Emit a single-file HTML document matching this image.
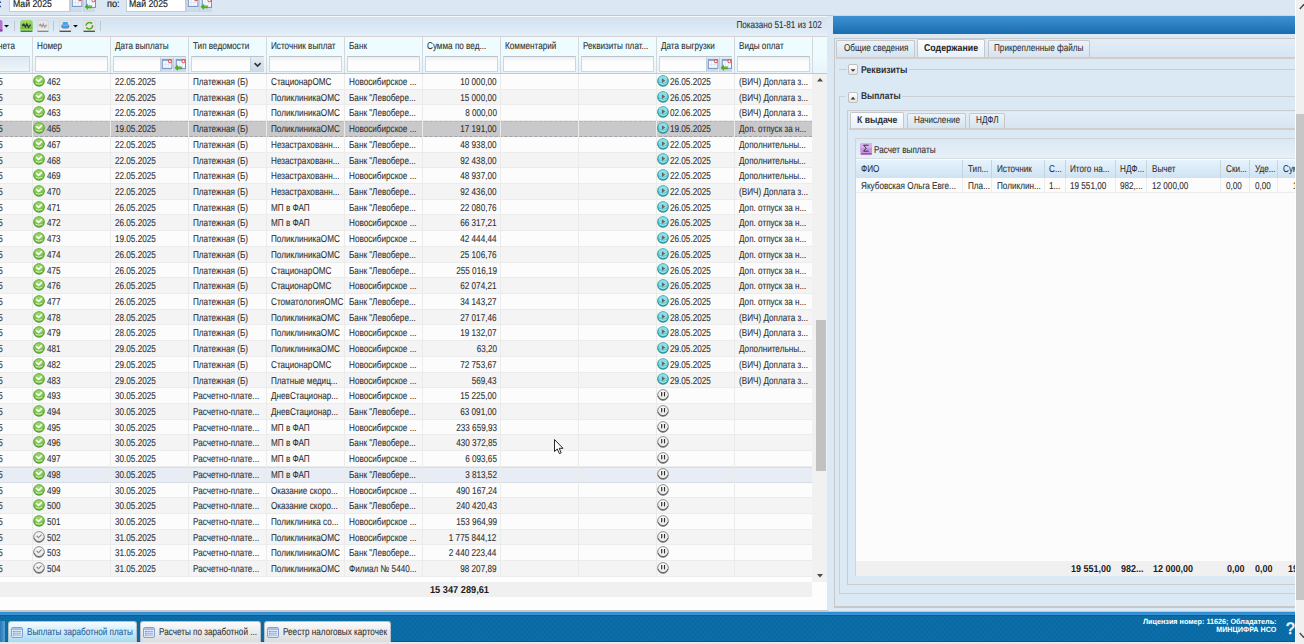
<!DOCTYPE html><html><head><meta charset="utf-8"><style>
*{box-sizing:border-box;margin:0;padding:0}
html,body{width:1304px;height:644px;overflow:hidden;background:#dbe9f5;font-family:"Liberation Sans",sans-serif;font-size:9px;color:#222}
.abs{position:absolute}
.ic{position:absolute}
.t{position:absolute;white-space:nowrap;height:12px;text-rendering:geometricPrecision}
.clip{position:absolute;overflow:hidden}
.cb{position:absolute;width:12.5px;background:linear-gradient(#e6edf4,#cbd7e3);border-left:1px solid #c6d0da}
.r{position:absolute;left:0;width:812.4px;height:15.7px;background:#fcfcfd;border-bottom:1px solid #ececec}
.r.alt{background:#f4f4f5}
.r.sel{background:#c9c9cb;border-top:1px dashed #b4b4b4;border-bottom:1px dashed #a4a4a4}
.r.hov{background:#e8ecf4;border-top:1px solid #d8dce4;border-bottom:1px solid #d8dce4}
.vs{position:absolute;width:1px;background:#ebebeb}
.box{position:absolute;border:1px solid #cbc7c3}
.tab{position:absolute;border:1px solid #c4c8cc;border-bottom:none;border-radius:2px 2px 0 0;background:linear-gradient(#edf3f9,#d6e3ef)}
.tab.act{background:linear-gradient(#fcfdff,#e6f0f8)}
.strip{position:absolute;background:#d0cdca}
.fi{position:absolute;background:linear-gradient(#eceff2,#fdfdfd 35%);border:1px solid #d0d6dc;border-top-color:#bcc2c8}
.ttab{position:absolute;border-radius:3px 3px 0 0;background:linear-gradient(#fbfbfb,#dcdcdc);border:1px solid #b8c0c8;border-bottom:none}
.ttab.act{background:linear-gradient(#f6fcff,#a6daf2)}
</style></head><body>
<div class="abs" style="left:0;top:0;width:1304px;height:15.3px;background:#dbe7f3"></div>
<div class="abs" style="left:0;top:15.0px;width:1304px;height:1px;background:#c6c6c6"></div>
<div class="t" style="left:-1.40px;transform-origin:0 0;top:-1.18px;font-size:10px;line-height:12px;transform:scaleX(0.8151);color:#111;-webkit-text-stroke:0.1px #111;-webkit-text-stroke:0.4px #111;">:</div>
<div class="abs" style="left:8.8px;top:-1px;width:60.9px;height:13px;background:#fff;border:1px solid #c4ccd4;border-top:none"></div>
<div class="t" style="left:12.60px;transform-origin:0 0;top:-1.38px;font-size:10px;line-height:12px;transform:scaleX(0.87);color:#1e1e1e;-webkit-text-stroke:0.1px #1e1e1e;-webkit-text-stroke:0.2px #1e1e1e;">Май 2025</div>
<div class="cb" style="left:69.8px;top:-3.5px;height:15.2px"><svg width="12.5" height="15" style="position:absolute;left:0;top:-1.4000000000000008px"><rect x="1.3" y="2.4" width="9.6" height="9" fill="#f6f8fc" stroke="#6f90c8" stroke-width="1"/><rect x="1.3" y="2.4" width="9.6" height="1.6" fill="#86a8dc"/><path d="M4.3 4.5 v6.5 M7.3 4.5 v6.5 M1.8 7.5 h8.6" stroke="#dde4ee" stroke-width="0.8"/><circle cx="8.9" cy="4.3" r="1.5" fill="#fff" stroke="#c83838" stroke-width="0.9"/></svg></div><div class="cb" style="left:82.7px;top:-3.5px;height:15.2px"><svg width="12.5" height="15" style="position:absolute;left:0;top:-1.0000000000000007px"><rect x="2.3" y="2.4" width="9.2" height="9" fill="#f6f8fc" stroke="#6f90c8" stroke-width="1"/><rect x="2.3" y="2.4" width="9.2" height="1.6" fill="#86a8dc"/><path d="M5.3 4.5 v6.5 M8.3 4.5 v6.5" stroke="#dde4ee" stroke-width="0.8"/><circle cx="9.4" cy="4.3" r="1.5" fill="#fff" stroke="#c83838" stroke-width="0.9"/><path d="M0.6 10.8 L3.8 7.6 L3.8 9.4 L7.8 9.4 L7.8 12.2 L3.8 12.2 L3.8 14 Z" fill="#4caa2c"/><path d="M4.4 10 h2.8" stroke="#9ad87a" stroke-width="0.8"/></svg></div>
<div class="t" style="left:106.60px;transform-origin:0 0;top:-1.38px;font-size:10px;line-height:12px;transform:scaleX(0.92);color:#1e1e1e;-webkit-text-stroke:0.1px #1e1e1e;-webkit-text-stroke:0.2px #1e1e1e;">по:</div>
<div class="abs" style="left:125.6px;top:-1px;width:60.4px;height:13px;background:#fff;border:1px solid #c4ccd4;border-top:none"></div>
<div class="t" style="left:128.70px;transform-origin:0 0;top:-1.38px;font-size:10px;line-height:12px;transform:scaleX(0.87);color:#1e1e1e;-webkit-text-stroke:0.1px #1e1e1e;-webkit-text-stroke:0.2px #1e1e1e;">Май 2025</div>
<div class="cb" style="left:186px;top:-3.5px;height:15.2px"><svg width="12.5" height="15" style="position:absolute;left:0;top:-1.4000000000000008px"><rect x="1.3" y="2.4" width="9.6" height="9" fill="#f6f8fc" stroke="#6f90c8" stroke-width="1"/><rect x="1.3" y="2.4" width="9.6" height="1.6" fill="#86a8dc"/><path d="M4.3 4.5 v6.5 M7.3 4.5 v6.5 M1.8 7.5 h8.6" stroke="#dde4ee" stroke-width="0.8"/><circle cx="8.9" cy="4.3" r="1.5" fill="#fff" stroke="#c83838" stroke-width="0.9"/></svg></div><div class="cb" style="left:199px;top:-3.5px;height:15.2px"><svg width="12.5" height="15" style="position:absolute;left:0;top:-1.0000000000000007px"><rect x="2.3" y="2.4" width="9.2" height="9" fill="#f6f8fc" stroke="#6f90c8" stroke-width="1"/><rect x="2.3" y="2.4" width="9.2" height="1.6" fill="#86a8dc"/><path d="M5.3 4.5 v6.5 M8.3 4.5 v6.5" stroke="#dde4ee" stroke-width="0.8"/><circle cx="9.4" cy="4.3" r="1.5" fill="#fff" stroke="#c83838" stroke-width="0.9"/><path d="M0.6 10.8 L3.8 7.6 L3.8 9.4 L7.8 9.4 L7.8 12.2 L3.8 12.2 L3.8 14 Z" fill="#4caa2c"/><path d="M4.4 10 h2.8" stroke="#9ad87a" stroke-width="0.8"/></svg></div>
<div class="clip" style="left:0;top:15.8px;width:827.2px;height:594.6px;background:#fdfdfe">
<div class="abs" style="left:0;top:0;width:827.6px;height:21.3px;background:linear-gradient(#d3e2ef,#e3eff9);border-top:1px solid #f4f8fc;border-bottom:1px solid #d4d2d2"></div>
<svg class="ic" style="left:-9px;top:4.2px" width="12" height="12"><rect x="0" y="0" width="11.5" height="11.5" rx="2" fill="#b474cc"/><rect x="0" y="9.5" width="11.5" height="2" fill="#8a3aa8"/></svg>
<svg class="ic" style="left:3.9px;top:9px" width="5" height="3"><path d="M0 0 L5 0 L2.5 2.6 Z" fill="#111"/></svg><div class="abs" style="left:14.2px;top:5.6px;width:1px;height:9.5px;background:#c0c8cc"></div>
<svg class="ic" style="left:20.2px;top:4.2px" width="13" height="12.5" viewBox="0 0 13 12.5">
<defs><linearGradient id="gG" x1="0" y1="0" x2="0" y2="1"><stop offset="0" stop-color="#a6dc6a"/><stop offset="1" stop-color="#62b52a"/></linearGradient></defs>
<rect x="0.3" y="0" width="12.4" height="11" rx="2" fill="url(#gG)"/>
<rect x="0.5" y="10" width="12" height="2.3" rx="1" fill="#3f8a1f"/>
<rect x="1" y="9.5" width="11" height="0.9" fill="#d8f0b8"/>
<path d="M2 4.6 L3.6 6 M3.4 3.6 L5.4 6.8 L6.8 4 L8.4 7.2 L10.6 4.6" fill="none" stroke="#3a3048" stroke-width="1.4"/>
</svg><svg class="ic" style="left:37px;top:4.2px" width="12" height="12.5" viewBox="0 0 12 12.5">
<rect x="0.4" y="0.3" width="11.2" height="11" rx="2" fill="#e6e6e6" stroke="#cfcfcf" stroke-width="0.6"/>
<rect x="0.5" y="10.2" width="11" height="2" rx="1" fill="#8a8a8a"/>
<rect x="1" y="9.6" width="10" height="0.8" fill="#fff"/>
<path d="M2 4.6 L3.4 6 M3.2 3.8 L5 6.8 L6.3 4.2 L7.8 7.2 L9.8 4.8" fill="none" stroke="#9a9a9a" stroke-width="1.2"/>
</svg><div class="abs" style="left:53.2px;top:5.6px;width:1px;height:9.5px;background:#c0c8cc"></div>
<svg class="ic" style="left:59.3px;top:4.2px" width="12.5" height="12.5" viewBox="0 0 12.5 12.5">
<rect x="0.4" y="0.3" width="11.7" height="11" rx="2" fill="#e8e6e6" stroke="#d4d0d0" stroke-width="0.6"/>
<rect x="0.5" y="10.2" width="11.5" height="2" rx="1" fill="#5a5450"/>
<rect x="1" y="9.6" width="10.5" height="0.8" fill="#fff"/>
<rect x="3.8" y="2" width="5" height="2.6" fill="#3aa8e8"/>
<rect x="2.4" y="4.4" width="7.8" height="3.6" rx="1.2" fill="#2a90d8"/>
<rect x="3.5" y="5.4" width="5.6" height="0.8" fill="#8fd0f4"/>
<rect x="3.4" y="7.6" width="5.8" height="1.2" fill="#9aa0d8"/>
</svg><svg class="ic" style="left:73px;top:9px" width="5" height="3"><path d="M0 0 L5 0 L2.5 2.6 Z" fill="#111"/></svg><svg class="ic" style="left:83.4px;top:4.2px" width="12.5" height="12.5" viewBox="0 0 12.5 12.5">
<rect x="0.4" y="0.3" width="11.7" height="11" rx="2" fill="#e8e6e6" stroke="#d4d0d0" stroke-width="0.6"/>
<rect x="0.5" y="10.2" width="11.5" height="2" rx="1" fill="#5a5450"/>
<rect x="1" y="9.6" width="10.5" height="0.8" fill="#fff"/>
<path d="M3 5.8 A3.2 3.2 0 0 1 8.6 3.6" fill="none" stroke="#4aae2a" stroke-width="1.5"/>
<path d="M9.5 5.2 A3.2 3.2 0 0 1 3.9 7.8" fill="none" stroke="#4aae2a" stroke-width="1.5"/>
<path d="M7.6 2.2 L9.6 2.6 L9 4.6 Z" fill="#4aae2a"/>
<path d="M4.9 9.2 L2.9 8.8 L3.5 6.8 Z" fill="#4aae2a"/>
</svg><div class="abs" style="left:100.3px;top:5.6px;width:1px;height:9.5px;background:#c0c8cc"></div>
<div class="t" style="right:calc(100% - 821.70px);transform-origin:100% 0;top:4.31px;font-size:10px;line-height:12px;transform:scaleX(0.8151);color:#303030;-webkit-text-stroke:0.1px #303030;">Показано 51-81 из 102</div>
<div class="abs" style="left:0;top:21.30px;width:827.6px;height:36.9px;background:linear-gradient(#effbfe 0,#eefbff 52%,#e6f4fb 100%)"></div>
<div class="abs" style="left:0;top:56.80px;width:827.6px;height:1.6px;background:#b9cad8"></div>
<div class="t" style="left:-2.00px;transform-origin:0 0;top:25.31px;font-size:10px;line-height:12px;transform:scaleX(0.8151);color:#303030;-webkit-text-stroke:0.1px #303030;">нета</div>
<div class="fi" style="left:-5.00px;top:40.30px;width:35.00px;height:16.4px;background:linear-gradient(#dde9f3,#eef5fa);"></div>
<div class="t" style="left:36.60px;transform-origin:0 0;top:25.31px;font-size:10px;line-height:12px;transform:scaleX(0.8151);color:#303030;-webkit-text-stroke:0.1px #303030;">Номер</div>
<div class="fi" style="left:34.90px;top:40.30px;width:73.10px;height:16.4px;"></div>
<div class="t" style="left:114.60px;transform-origin:0 0;top:25.31px;font-size:10px;line-height:12px;transform:scaleX(0.8151);color:#303030;-webkit-text-stroke:0.1px #303030;">Дата выплаты</div>
<div class="fi" style="left:112.90px;top:40.30px;width:73.20px;height:16.4px;"></div>
<div class="cb" style="left:159.6px;top:40.8px;height:15px"><svg width="12.5" height="15" style="position:absolute;left:0;top:0px"><rect x="1.3" y="2.4" width="9.6" height="9" fill="#f6f8fc" stroke="#6f90c8" stroke-width="1"/><rect x="1.3" y="2.4" width="9.6" height="1.6" fill="#86a8dc"/><path d="M4.3 4.5 v6.5 M7.3 4.5 v6.5 M1.8 7.5 h8.6" stroke="#dde4ee" stroke-width="0.8"/><circle cx="8.9" cy="4.3" r="1.5" fill="#fff" stroke="#c83838" stroke-width="0.9"/></svg></div><div class="cb" style="left:172.8px;top:40.8px;height:15px"><svg width="12.5" height="15" style="position:absolute;left:0;top:0px"><rect x="2.3" y="2.4" width="9.2" height="9" fill="#f6f8fc" stroke="#6f90c8" stroke-width="1"/><rect x="2.3" y="2.4" width="9.2" height="1.6" fill="#86a8dc"/><path d="M5.3 4.5 v6.5 M8.3 4.5 v6.5" stroke="#dde4ee" stroke-width="0.8"/><circle cx="9.4" cy="4.3" r="1.5" fill="#fff" stroke="#c83838" stroke-width="0.9"/><path d="M0.6 10.8 L3.8 7.6 L3.8 9.4 L7.8 9.4 L7.8 12.2 L3.8 12.2 L3.8 14 Z" fill="#4caa2c"/><path d="M4.4 10 h2.8" stroke="#9ad87a" stroke-width="0.8"/></svg></div>
<div class="t" style="left:192.70px;transform-origin:0 0;top:25.31px;font-size:10px;line-height:12px;transform:scaleX(0.8151);color:#303030;-webkit-text-stroke:0.1px #303030;">Тип ведомости</div>
<div class="fi" style="left:191.00px;top:40.30px;width:73.00px;height:16.4px;"></div>
<div class="cb" style="left:250.30px;top:40.80px;width:13.6px;height:15px"><svg width="13" height="15" style="position:absolute;left:0;top:0"><path d="M3.6 6.2 L6.6 9 L9.6 6.2" fill="none" stroke="#2a3440" stroke-width="1.7"/></svg></div>
<div class="t" style="left:270.60px;transform-origin:0 0;top:25.31px;font-size:10px;line-height:12px;transform:scaleX(0.8151);color:#303030;-webkit-text-stroke:0.1px #303030;">Источник выплат</div>
<div class="fi" style="left:268.90px;top:40.30px;width:73.30px;height:16.4px;"></div>
<div class="t" style="left:348.80px;transform-origin:0 0;top:25.31px;font-size:10px;line-height:12px;transform:scaleX(0.8151);color:#303030;-webkit-text-stroke:0.1px #303030;">Банк</div>
<div class="fi" style="left:347.10px;top:40.30px;width:73.20px;height:16.4px;"></div>
<div class="t" style="left:426.90px;transform-origin:0 0;top:25.31px;font-size:10px;line-height:12px;transform:scaleX(0.8151);color:#303030;-webkit-text-stroke:0.1px #303030;">Сумма по вед...</div>
<div class="fi" style="left:425.20px;top:40.30px;width:73.00px;height:16.4px;"></div>
<div class="t" style="left:504.80px;transform-origin:0 0;top:25.31px;font-size:10px;line-height:12px;transform:scaleX(0.8151);color:#303030;-webkit-text-stroke:0.1px #303030;">Комментарий</div>
<div class="fi" style="left:503.10px;top:40.30px;width:73.20px;height:16.4px;"></div>
<div class="t" style="left:582.90px;transform-origin:0 0;top:25.31px;font-size:10px;line-height:12px;transform:scaleX(0.8151);color:#303030;-webkit-text-stroke:0.1px #303030;">Реквизиты плат...</div>
<div class="fi" style="left:581.20px;top:40.30px;width:73.00px;height:16.4px;"></div>
<div class="t" style="left:660.80px;transform-origin:0 0;top:25.31px;font-size:10px;line-height:12px;transform:scaleX(0.8151);color:#303030;-webkit-text-stroke:0.1px #303030;">Дата выгрузки</div>
<div class="fi" style="left:659.10px;top:40.30px;width:73.20px;height:16.4px;"></div>
<div class="cb" style="left:705.8000000000001px;top:40.8px;height:15px"><svg width="12.5" height="15" style="position:absolute;left:0;top:0px"><rect x="1.3" y="2.4" width="9.6" height="9" fill="#f6f8fc" stroke="#6f90c8" stroke-width="1"/><rect x="1.3" y="2.4" width="9.6" height="1.6" fill="#86a8dc"/><path d="M4.3 4.5 v6.5 M7.3 4.5 v6.5 M1.8 7.5 h8.6" stroke="#dde4ee" stroke-width="0.8"/><circle cx="8.9" cy="4.3" r="1.5" fill="#fff" stroke="#c83838" stroke-width="0.9"/></svg></div><div class="cb" style="left:719.0px;top:40.8px;height:15px"><svg width="12.5" height="15" style="position:absolute;left:0;top:0px"><rect x="2.3" y="2.4" width="9.2" height="9" fill="#f6f8fc" stroke="#6f90c8" stroke-width="1"/><rect x="2.3" y="2.4" width="9.2" height="1.6" fill="#86a8dc"/><path d="M5.3 4.5 v6.5 M8.3 4.5 v6.5" stroke="#dde4ee" stroke-width="0.8"/><circle cx="9.4" cy="4.3" r="1.5" fill="#fff" stroke="#c83838" stroke-width="0.9"/><path d="M0.6 10.8 L3.8 7.6 L3.8 9.4 L7.8 9.4 L7.8 12.2 L3.8 12.2 L3.8 14 Z" fill="#4caa2c"/><path d="M4.4 10 h2.8" stroke="#9ad87a" stroke-width="0.8"/></svg></div>
<div class="t" style="left:738.90px;transform-origin:0 0;top:25.31px;font-size:10px;line-height:12px;transform:scaleX(0.8151);color:#303030;-webkit-text-stroke:0.1px #303030;">Виды оплат</div>
<div class="fi" style="left:737.20px;top:40.30px;width:72.90px;height:16.4px;"></div>
<div class="vs" style="left:31.80px;top:21.30px;height:35.6px;background:#d4d8dc"></div>
<div class="vs" style="left:109.80px;top:21.30px;height:35.6px;background:#d4d8dc"></div>
<div class="vs" style="left:187.90px;top:21.30px;height:35.6px;background:#d4d8dc"></div>
<div class="vs" style="left:265.80px;top:21.30px;height:35.6px;background:#d4d8dc"></div>
<div class="vs" style="left:344.00px;top:21.30px;height:35.6px;background:#d4d8dc"></div>
<div class="vs" style="left:422.10px;top:21.30px;height:35.6px;background:#d4d8dc"></div>
<div class="vs" style="left:500.00px;top:21.30px;height:35.6px;background:#d4d8dc"></div>
<div class="vs" style="left:578.10px;top:21.30px;height:35.6px;background:#d4d8dc"></div>
<div class="vs" style="left:656.00px;top:21.30px;height:35.6px;background:#d4d8dc"></div>
<div class="vs" style="left:734.10px;top:21.30px;height:35.6px;background:#d4d8dc"></div>
<div class="vs" style="left:811.90px;top:21.30px;height:35.6px;background:#d4d8dc"></div>
<div class="r" style="top:58.20px"></div>
<div class="r alt" style="top:73.92px"></div>
<div class="r" style="top:89.63px"></div>
<div class="r sel" style="top:105.35px"></div>
<div class="r" style="top:121.06px"></div>
<div class="r alt" style="top:136.78px"></div>
<div class="r" style="top:152.50px"></div>
<div class="r alt" style="top:168.21px"></div>
<div class="r" style="top:183.93px"></div>
<div class="r alt" style="top:199.64px"></div>
<div class="r" style="top:215.36px"></div>
<div class="r alt" style="top:231.08px"></div>
<div class="r" style="top:246.79px"></div>
<div class="r alt" style="top:262.51px"></div>
<div class="r" style="top:278.22px"></div>
<div class="r alt" style="top:293.94px"></div>
<div class="r" style="top:309.66px"></div>
<div class="r alt" style="top:325.37px"></div>
<div class="r" style="top:341.09px"></div>
<div class="r alt" style="top:356.80px"></div>
<div class="r" style="top:372.52px"></div>
<div class="r alt" style="top:388.24px"></div>
<div class="r" style="top:403.95px"></div>
<div class="r alt" style="top:419.67px"></div>
<div class="r" style="top:435.38px"></div>
<div class="r hov" style="top:451.10px"></div>
<div class="r" style="top:466.82px"></div>
<div class="r alt" style="top:482.53px"></div>
<div class="r" style="top:498.25px"></div>
<div class="r alt" style="top:513.96px"></div>
<div class="r" style="top:529.68px"></div>
<div class="r alt" style="top:545.40px"></div>
<div class="vs" style="left:31.80px;top:58.20px;height:502.91px"></div>
<div class="vs" style="left:109.80px;top:58.20px;height:502.91px"></div>
<div class="vs" style="left:187.90px;top:58.20px;height:502.91px"></div>
<div class="vs" style="left:265.80px;top:58.20px;height:502.91px"></div>
<div class="vs" style="left:344.00px;top:58.20px;height:502.91px"></div>
<div class="vs" style="left:422.10px;top:58.20px;height:502.91px"></div>
<div class="vs" style="left:500.00px;top:58.20px;height:502.91px"></div>
<div class="vs" style="left:578.10px;top:58.20px;height:502.91px"></div>
<div class="vs" style="left:656.00px;top:58.20px;height:502.91px"></div>
<div class="vs" style="left:734.10px;top:58.20px;height:502.91px"></div>
<div class="vs" style="left:811.90px;top:58.20px;height:502.91px"></div>
<div class="t" style="left:-37.60px;transform-origin:0 0;top:61.22px;font-size:10px;line-height:12px;transform:scaleX(0.8151);color:#303030;-webkit-text-stroke:0.1px #303030;">22.05.2025</div>
<svg class="ic" style="left:33.20px;top:59.10px" width="12" height="12" viewBox="0 0 12 12"><circle cx="6" cy="6" r="5.8" fill="#4e9a2a"/><circle cx="6" cy="5.6" r="5" fill="#7cc24a"/><ellipse cx="6" cy="4.2" rx="3.8" ry="2.8" fill="#9ad46c"/><path d="M3.2 4.2 L5.6 6.4 L8.8 3.2" fill="none" stroke="#fff" stroke-width="1.5"/><path d="M2.6 8.2 Q6 10.2 9.4 8.2" fill="none" stroke="#e8f6dc" stroke-width="0.8"/></svg>
<div class="t" style="left:47.10px;transform-origin:0 0;top:61.22px;font-size:10px;line-height:12px;transform:scaleX(0.8151);color:#303030;-webkit-text-stroke:0.1px #303030;">462</div>
<div class="t" style="left:114.90px;transform-origin:0 0;top:61.22px;font-size:10px;line-height:12px;transform:scaleX(0.8151);color:#303030;-webkit-text-stroke:0.1px #303030;">22.05.2025</div>
<div class="t" style="left:193.00px;transform-origin:0 0;top:61.22px;font-size:10px;line-height:12px;transform:scaleX(0.8151);color:#303030;-webkit-text-stroke:0.1px #303030;">Платежная (Б)</div>
<div class="t" style="left:270.90px;transform-origin:0 0;top:61.22px;font-size:10px;line-height:12px;transform:scaleX(0.8151);color:#303030;-webkit-text-stroke:0.1px #303030;">СтационарОМС</div>
<div class="t" style="left:349.10px;transform-origin:0 0;top:61.22px;font-size:10px;line-height:12px;transform:scaleX(0.8151);color:#303030;-webkit-text-stroke:0.1px #303030;">Новосибирское ...</div>
<div class="t" style="right:calc(100% - 496.70px);transform-origin:100% 0;top:61.22px;font-size:10px;line-height:12px;transform:scaleX(0.8151);color:#303030;-webkit-text-stroke:0.1px #303030;">10 000,00</div>
<svg class="ic" style="left:657.00px;top:59.10px" width="12" height="12" viewBox="0 0 12 12"><circle cx="6" cy="6" r="5.8" fill="#1e8f96"/><circle cx="6" cy="5.5" r="5" fill="#5cc8d0"/><ellipse cx="6" cy="4.4" rx="4" ry="3.2" fill="#8ee0e6"/><path d="M4.9 3.2 L8.2 5.6 L4.9 8 Z" fill="#6a6468"/><path d="M2.4 8.4 Q6 10.4 9.6 8.4" fill="none" stroke="#d0f4f6" stroke-width="0.7"/></svg>
<div class="t" style="left:670.10px;transform-origin:0 0;top:61.22px;font-size:10px;line-height:12px;transform:scaleX(0.8151);color:#303030;-webkit-text-stroke:0.1px #303030;">26.05.2025</div>
<div class="t" style="left:739.20px;transform-origin:0 0;top:61.22px;font-size:10px;line-height:12px;transform:scaleX(0.8151);color:#303030;-webkit-text-stroke:0.1px #303030;">(ВИЧ) Доплата з...</div>
<div class="t" style="left:-37.60px;transform-origin:0 0;top:76.93px;font-size:10px;line-height:12px;transform:scaleX(0.8151);color:#303030;-webkit-text-stroke:0.1px #303030;">22.05.2025</div>
<svg class="ic" style="left:33.20px;top:74.82px" width="12" height="12" viewBox="0 0 12 12"><circle cx="6" cy="6" r="5.8" fill="#4e9a2a"/><circle cx="6" cy="5.6" r="5" fill="#7cc24a"/><ellipse cx="6" cy="4.2" rx="3.8" ry="2.8" fill="#9ad46c"/><path d="M3.2 4.2 L5.6 6.4 L8.8 3.2" fill="none" stroke="#fff" stroke-width="1.5"/><path d="M2.6 8.2 Q6 10.2 9.4 8.2" fill="none" stroke="#e8f6dc" stroke-width="0.8"/></svg>
<div class="t" style="left:47.10px;transform-origin:0 0;top:76.93px;font-size:10px;line-height:12px;transform:scaleX(0.8151);color:#303030;-webkit-text-stroke:0.1px #303030;">463</div>
<div class="t" style="left:114.90px;transform-origin:0 0;top:76.93px;font-size:10px;line-height:12px;transform:scaleX(0.8151);color:#303030;-webkit-text-stroke:0.1px #303030;">22.05.2025</div>
<div class="t" style="left:193.00px;transform-origin:0 0;top:76.93px;font-size:10px;line-height:12px;transform:scaleX(0.8151);color:#303030;-webkit-text-stroke:0.1px #303030;">Платежная (Б)</div>
<div class="t" style="left:270.90px;transform-origin:0 0;top:76.93px;font-size:10px;line-height:12px;transform:scaleX(0.8151);color:#303030;-webkit-text-stroke:0.1px #303030;">ПоликлиникаОМС</div>
<div class="t" style="left:349.10px;transform-origin:0 0;top:76.93px;font-size:10px;line-height:12px;transform:scaleX(0.8151);color:#303030;-webkit-text-stroke:0.1px #303030;">Банк &quot;Левобере...</div>
<div class="t" style="right:calc(100% - 496.70px);transform-origin:100% 0;top:76.93px;font-size:10px;line-height:12px;transform:scaleX(0.8151);color:#303030;-webkit-text-stroke:0.1px #303030;">15 000,00</div>
<svg class="ic" style="left:657.00px;top:74.82px" width="12" height="12" viewBox="0 0 12 12"><circle cx="6" cy="6" r="5.8" fill="#1e8f96"/><circle cx="6" cy="5.5" r="5" fill="#5cc8d0"/><ellipse cx="6" cy="4.4" rx="4" ry="3.2" fill="#8ee0e6"/><path d="M4.9 3.2 L8.2 5.6 L4.9 8 Z" fill="#6a6468"/><path d="M2.4 8.4 Q6 10.4 9.6 8.4" fill="none" stroke="#d0f4f6" stroke-width="0.7"/></svg>
<div class="t" style="left:670.10px;transform-origin:0 0;top:76.93px;font-size:10px;line-height:12px;transform:scaleX(0.8151);color:#303030;-webkit-text-stroke:0.1px #303030;">26.05.2025</div>
<div class="t" style="left:739.20px;transform-origin:0 0;top:76.93px;font-size:10px;line-height:12px;transform:scaleX(0.8151);color:#303030;-webkit-text-stroke:0.1px #303030;">(ВИЧ) Доплата з...</div>
<div class="t" style="left:-37.60px;transform-origin:0 0;top:92.65px;font-size:10px;line-height:12px;transform:scaleX(0.8151);color:#303030;-webkit-text-stroke:0.1px #303030;">22.05.2025</div>
<svg class="ic" style="left:33.20px;top:90.53px" width="12" height="12" viewBox="0 0 12 12"><circle cx="6" cy="6" r="5.8" fill="#4e9a2a"/><circle cx="6" cy="5.6" r="5" fill="#7cc24a"/><ellipse cx="6" cy="4.2" rx="3.8" ry="2.8" fill="#9ad46c"/><path d="M3.2 4.2 L5.6 6.4 L8.8 3.2" fill="none" stroke="#fff" stroke-width="1.5"/><path d="M2.6 8.2 Q6 10.2 9.4 8.2" fill="none" stroke="#e8f6dc" stroke-width="0.8"/></svg>
<div class="t" style="left:47.10px;transform-origin:0 0;top:92.65px;font-size:10px;line-height:12px;transform:scaleX(0.8151);color:#303030;-webkit-text-stroke:0.1px #303030;">463</div>
<div class="t" style="left:114.90px;transform-origin:0 0;top:92.65px;font-size:10px;line-height:12px;transform:scaleX(0.8151);color:#303030;-webkit-text-stroke:0.1px #303030;">22.05.2025</div>
<div class="t" style="left:193.00px;transform-origin:0 0;top:92.65px;font-size:10px;line-height:12px;transform:scaleX(0.8151);color:#303030;-webkit-text-stroke:0.1px #303030;">Платежная (Б)</div>
<div class="t" style="left:270.90px;transform-origin:0 0;top:92.65px;font-size:10px;line-height:12px;transform:scaleX(0.8151);color:#303030;-webkit-text-stroke:0.1px #303030;">ПоликлиникаОМС</div>
<div class="t" style="left:349.10px;transform-origin:0 0;top:92.65px;font-size:10px;line-height:12px;transform:scaleX(0.8151);color:#303030;-webkit-text-stroke:0.1px #303030;">Банк &quot;Левобере...</div>
<div class="t" style="right:calc(100% - 496.70px);transform-origin:100% 0;top:92.65px;font-size:10px;line-height:12px;transform:scaleX(0.8151);color:#303030;-webkit-text-stroke:0.1px #303030;">8 000,00</div>
<svg class="ic" style="left:657.00px;top:90.53px" width="12" height="12" viewBox="0 0 12 12"><circle cx="6" cy="6" r="5.8" fill="#1e8f96"/><circle cx="6" cy="5.5" r="5" fill="#5cc8d0"/><ellipse cx="6" cy="4.4" rx="4" ry="3.2" fill="#8ee0e6"/><path d="M4.9 3.2 L8.2 5.6 L4.9 8 Z" fill="#6a6468"/><path d="M2.4 8.4 Q6 10.4 9.6 8.4" fill="none" stroke="#d0f4f6" stroke-width="0.7"/></svg>
<div class="t" style="left:670.10px;transform-origin:0 0;top:92.65px;font-size:10px;line-height:12px;transform:scaleX(0.8151);color:#303030;-webkit-text-stroke:0.1px #303030;">02.06.2025</div>
<div class="t" style="left:739.20px;transform-origin:0 0;top:92.65px;font-size:10px;line-height:12px;transform:scaleX(0.8151);color:#303030;-webkit-text-stroke:0.1px #303030;">(ВИЧ) Доплата з...</div>
<div class="t" style="left:-37.60px;transform-origin:0 0;top:108.36px;font-size:10px;line-height:12px;transform:scaleX(0.8151);color:#303030;-webkit-text-stroke:0.1px #303030;">19.05.2025</div>
<svg class="ic" style="left:33.20px;top:106.25px" width="12" height="12" viewBox="0 0 12 12"><circle cx="6" cy="6" r="5.8" fill="#4e9a2a"/><circle cx="6" cy="5.6" r="5" fill="#7cc24a"/><ellipse cx="6" cy="4.2" rx="3.8" ry="2.8" fill="#9ad46c"/><path d="M3.2 4.2 L5.6 6.4 L8.8 3.2" fill="none" stroke="#fff" stroke-width="1.5"/><path d="M2.6 8.2 Q6 10.2 9.4 8.2" fill="none" stroke="#e8f6dc" stroke-width="0.8"/></svg>
<div class="t" style="left:47.10px;transform-origin:0 0;top:108.36px;font-size:10px;line-height:12px;transform:scaleX(0.8151);color:#303030;-webkit-text-stroke:0.1px #303030;">465</div>
<div class="t" style="left:114.90px;transform-origin:0 0;top:108.36px;font-size:10px;line-height:12px;transform:scaleX(0.8151);color:#303030;-webkit-text-stroke:0.1px #303030;">19.05.2025</div>
<div class="t" style="left:193.00px;transform-origin:0 0;top:108.36px;font-size:10px;line-height:12px;transform:scaleX(0.8151);color:#303030;-webkit-text-stroke:0.1px #303030;">Платежная (Б)</div>
<div class="t" style="left:270.90px;transform-origin:0 0;top:108.36px;font-size:10px;line-height:12px;transform:scaleX(0.8151);color:#303030;-webkit-text-stroke:0.1px #303030;">ПоликлиникаОМС</div>
<div class="t" style="left:349.10px;transform-origin:0 0;top:108.36px;font-size:10px;line-height:12px;transform:scaleX(0.8151);color:#303030;-webkit-text-stroke:0.1px #303030;">Новосибирское ...</div>
<div class="t" style="right:calc(100% - 496.70px);transform-origin:100% 0;top:108.36px;font-size:10px;line-height:12px;transform:scaleX(0.8151);color:#303030;-webkit-text-stroke:0.1px #303030;">17 191,00</div>
<svg class="ic" style="left:657.00px;top:106.25px" width="12" height="12" viewBox="0 0 12 12"><circle cx="6" cy="6" r="5.8" fill="#1e8f96"/><circle cx="6" cy="5.5" r="5" fill="#5cc8d0"/><ellipse cx="6" cy="4.4" rx="4" ry="3.2" fill="#8ee0e6"/><path d="M4.9 3.2 L8.2 5.6 L4.9 8 Z" fill="#6a6468"/><path d="M2.4 8.4 Q6 10.4 9.6 8.4" fill="none" stroke="#d0f4f6" stroke-width="0.7"/></svg>
<div class="t" style="left:670.10px;transform-origin:0 0;top:108.36px;font-size:10px;line-height:12px;transform:scaleX(0.8151);color:#303030;-webkit-text-stroke:0.1px #303030;">19.05.2025</div>
<div class="t" style="left:739.20px;transform-origin:0 0;top:108.36px;font-size:10px;line-height:12px;transform:scaleX(0.8151);color:#303030;-webkit-text-stroke:0.1px #303030;">Доп. отпуск за н...</div>
<div class="t" style="left:-37.60px;transform-origin:0 0;top:124.08px;font-size:10px;line-height:12px;transform:scaleX(0.8151);color:#303030;-webkit-text-stroke:0.1px #303030;">22.05.2025</div>
<svg class="ic" style="left:33.20px;top:121.96px" width="12" height="12" viewBox="0 0 12 12"><circle cx="6" cy="6" r="5.8" fill="#4e9a2a"/><circle cx="6" cy="5.6" r="5" fill="#7cc24a"/><ellipse cx="6" cy="4.2" rx="3.8" ry="2.8" fill="#9ad46c"/><path d="M3.2 4.2 L5.6 6.4 L8.8 3.2" fill="none" stroke="#fff" stroke-width="1.5"/><path d="M2.6 8.2 Q6 10.2 9.4 8.2" fill="none" stroke="#e8f6dc" stroke-width="0.8"/></svg>
<div class="t" style="left:47.10px;transform-origin:0 0;top:124.08px;font-size:10px;line-height:12px;transform:scaleX(0.8151);color:#303030;-webkit-text-stroke:0.1px #303030;">467</div>
<div class="t" style="left:114.90px;transform-origin:0 0;top:124.08px;font-size:10px;line-height:12px;transform:scaleX(0.8151);color:#303030;-webkit-text-stroke:0.1px #303030;">22.05.2025</div>
<div class="t" style="left:193.00px;transform-origin:0 0;top:124.08px;font-size:10px;line-height:12px;transform:scaleX(0.8151);color:#303030;-webkit-text-stroke:0.1px #303030;">Платежная (Б)</div>
<div class="t" style="left:270.90px;transform-origin:0 0;top:124.08px;font-size:10px;line-height:12px;transform:scaleX(0.8151);color:#303030;-webkit-text-stroke:0.1px #303030;">Незастрахованн...</div>
<div class="t" style="left:349.10px;transform-origin:0 0;top:124.08px;font-size:10px;line-height:12px;transform:scaleX(0.8151);color:#303030;-webkit-text-stroke:0.1px #303030;">Банк &quot;Левобере...</div>
<div class="t" style="right:calc(100% - 496.70px);transform-origin:100% 0;top:124.08px;font-size:10px;line-height:12px;transform:scaleX(0.8151);color:#303030;-webkit-text-stroke:0.1px #303030;">48 938,00</div>
<svg class="ic" style="left:657.00px;top:121.96px" width="12" height="12" viewBox="0 0 12 12"><circle cx="6" cy="6" r="5.8" fill="#1e8f96"/><circle cx="6" cy="5.5" r="5" fill="#5cc8d0"/><ellipse cx="6" cy="4.4" rx="4" ry="3.2" fill="#8ee0e6"/><path d="M4.9 3.2 L8.2 5.6 L4.9 8 Z" fill="#6a6468"/><path d="M2.4 8.4 Q6 10.4 9.6 8.4" fill="none" stroke="#d0f4f6" stroke-width="0.7"/></svg>
<div class="t" style="left:670.10px;transform-origin:0 0;top:124.08px;font-size:10px;line-height:12px;transform:scaleX(0.8151);color:#303030;-webkit-text-stroke:0.1px #303030;">22.05.2025</div>
<div class="t" style="left:739.20px;transform-origin:0 0;top:124.08px;font-size:10px;line-height:12px;transform:scaleX(0.8151);color:#303030;-webkit-text-stroke:0.1px #303030;">Дополнительны...</div>
<div class="t" style="left:-37.60px;transform-origin:0 0;top:139.79px;font-size:10px;line-height:12px;transform:scaleX(0.8151);color:#303030;-webkit-text-stroke:0.1px #303030;">22.05.2025</div>
<svg class="ic" style="left:33.20px;top:137.68px" width="12" height="12" viewBox="0 0 12 12"><circle cx="6" cy="6" r="5.8" fill="#4e9a2a"/><circle cx="6" cy="5.6" r="5" fill="#7cc24a"/><ellipse cx="6" cy="4.2" rx="3.8" ry="2.8" fill="#9ad46c"/><path d="M3.2 4.2 L5.6 6.4 L8.8 3.2" fill="none" stroke="#fff" stroke-width="1.5"/><path d="M2.6 8.2 Q6 10.2 9.4 8.2" fill="none" stroke="#e8f6dc" stroke-width="0.8"/></svg>
<div class="t" style="left:47.10px;transform-origin:0 0;top:139.79px;font-size:10px;line-height:12px;transform:scaleX(0.8151);color:#303030;-webkit-text-stroke:0.1px #303030;">468</div>
<div class="t" style="left:114.90px;transform-origin:0 0;top:139.79px;font-size:10px;line-height:12px;transform:scaleX(0.8151);color:#303030;-webkit-text-stroke:0.1px #303030;">22.05.2025</div>
<div class="t" style="left:193.00px;transform-origin:0 0;top:139.79px;font-size:10px;line-height:12px;transform:scaleX(0.8151);color:#303030;-webkit-text-stroke:0.1px #303030;">Платежная (Б)</div>
<div class="t" style="left:270.90px;transform-origin:0 0;top:139.79px;font-size:10px;line-height:12px;transform:scaleX(0.8151);color:#303030;-webkit-text-stroke:0.1px #303030;">Незастрахованн...</div>
<div class="t" style="left:349.10px;transform-origin:0 0;top:139.79px;font-size:10px;line-height:12px;transform:scaleX(0.8151);color:#303030;-webkit-text-stroke:0.1px #303030;">Банк &quot;Левобере...</div>
<div class="t" style="right:calc(100% - 496.70px);transform-origin:100% 0;top:139.79px;font-size:10px;line-height:12px;transform:scaleX(0.8151);color:#303030;-webkit-text-stroke:0.1px #303030;">92 438,00</div>
<svg class="ic" style="left:657.00px;top:137.68px" width="12" height="12" viewBox="0 0 12 12"><circle cx="6" cy="6" r="5.8" fill="#1e8f96"/><circle cx="6" cy="5.5" r="5" fill="#5cc8d0"/><ellipse cx="6" cy="4.4" rx="4" ry="3.2" fill="#8ee0e6"/><path d="M4.9 3.2 L8.2 5.6 L4.9 8 Z" fill="#6a6468"/><path d="M2.4 8.4 Q6 10.4 9.6 8.4" fill="none" stroke="#d0f4f6" stroke-width="0.7"/></svg>
<div class="t" style="left:670.10px;transform-origin:0 0;top:139.79px;font-size:10px;line-height:12px;transform:scaleX(0.8151);color:#303030;-webkit-text-stroke:0.1px #303030;">22.05.2025</div>
<div class="t" style="left:739.20px;transform-origin:0 0;top:139.79px;font-size:10px;line-height:12px;transform:scaleX(0.8151);color:#303030;-webkit-text-stroke:0.1px #303030;">Дополнительны...</div>
<div class="t" style="left:-37.60px;transform-origin:0 0;top:155.51px;font-size:10px;line-height:12px;transform:scaleX(0.8151);color:#303030;-webkit-text-stroke:0.1px #303030;">22.05.2025</div>
<svg class="ic" style="left:33.20px;top:153.40px" width="12" height="12" viewBox="0 0 12 12"><circle cx="6" cy="6" r="5.8" fill="#4e9a2a"/><circle cx="6" cy="5.6" r="5" fill="#7cc24a"/><ellipse cx="6" cy="4.2" rx="3.8" ry="2.8" fill="#9ad46c"/><path d="M3.2 4.2 L5.6 6.4 L8.8 3.2" fill="none" stroke="#fff" stroke-width="1.5"/><path d="M2.6 8.2 Q6 10.2 9.4 8.2" fill="none" stroke="#e8f6dc" stroke-width="0.8"/></svg>
<div class="t" style="left:47.10px;transform-origin:0 0;top:155.51px;font-size:10px;line-height:12px;transform:scaleX(0.8151);color:#303030;-webkit-text-stroke:0.1px #303030;">469</div>
<div class="t" style="left:114.90px;transform-origin:0 0;top:155.51px;font-size:10px;line-height:12px;transform:scaleX(0.8151);color:#303030;-webkit-text-stroke:0.1px #303030;">22.05.2025</div>
<div class="t" style="left:193.00px;transform-origin:0 0;top:155.51px;font-size:10px;line-height:12px;transform:scaleX(0.8151);color:#303030;-webkit-text-stroke:0.1px #303030;">Платежная (Б)</div>
<div class="t" style="left:270.90px;transform-origin:0 0;top:155.51px;font-size:10px;line-height:12px;transform:scaleX(0.8151);color:#303030;-webkit-text-stroke:0.1px #303030;">Незастрахованн...</div>
<div class="t" style="left:349.10px;transform-origin:0 0;top:155.51px;font-size:10px;line-height:12px;transform:scaleX(0.8151);color:#303030;-webkit-text-stroke:0.1px #303030;">Новосибирское ...</div>
<div class="t" style="right:calc(100% - 496.70px);transform-origin:100% 0;top:155.51px;font-size:10px;line-height:12px;transform:scaleX(0.8151);color:#303030;-webkit-text-stroke:0.1px #303030;">48 937,00</div>
<svg class="ic" style="left:657.00px;top:153.40px" width="12" height="12" viewBox="0 0 12 12"><circle cx="6" cy="6" r="5.8" fill="#1e8f96"/><circle cx="6" cy="5.5" r="5" fill="#5cc8d0"/><ellipse cx="6" cy="4.4" rx="4" ry="3.2" fill="#8ee0e6"/><path d="M4.9 3.2 L8.2 5.6 L4.9 8 Z" fill="#6a6468"/><path d="M2.4 8.4 Q6 10.4 9.6 8.4" fill="none" stroke="#d0f4f6" stroke-width="0.7"/></svg>
<div class="t" style="left:670.10px;transform-origin:0 0;top:155.51px;font-size:10px;line-height:12px;transform:scaleX(0.8151);color:#303030;-webkit-text-stroke:0.1px #303030;">22.05.2025</div>
<div class="t" style="left:739.20px;transform-origin:0 0;top:155.51px;font-size:10px;line-height:12px;transform:scaleX(0.8151);color:#303030;-webkit-text-stroke:0.1px #303030;">Дополнительны...</div>
<div class="t" style="left:-37.60px;transform-origin:0 0;top:171.23px;font-size:10px;line-height:12px;transform:scaleX(0.8151);color:#303030;-webkit-text-stroke:0.1px #303030;">22.05.2025</div>
<svg class="ic" style="left:33.20px;top:169.11px" width="12" height="12" viewBox="0 0 12 12"><circle cx="6" cy="6" r="5.8" fill="#4e9a2a"/><circle cx="6" cy="5.6" r="5" fill="#7cc24a"/><ellipse cx="6" cy="4.2" rx="3.8" ry="2.8" fill="#9ad46c"/><path d="M3.2 4.2 L5.6 6.4 L8.8 3.2" fill="none" stroke="#fff" stroke-width="1.5"/><path d="M2.6 8.2 Q6 10.2 9.4 8.2" fill="none" stroke="#e8f6dc" stroke-width="0.8"/></svg>
<div class="t" style="left:47.10px;transform-origin:0 0;top:171.23px;font-size:10px;line-height:12px;transform:scaleX(0.8151);color:#303030;-webkit-text-stroke:0.1px #303030;">470</div>
<div class="t" style="left:114.90px;transform-origin:0 0;top:171.23px;font-size:10px;line-height:12px;transform:scaleX(0.8151);color:#303030;-webkit-text-stroke:0.1px #303030;">22.05.2025</div>
<div class="t" style="left:193.00px;transform-origin:0 0;top:171.23px;font-size:10px;line-height:12px;transform:scaleX(0.8151);color:#303030;-webkit-text-stroke:0.1px #303030;">Платежная (Б)</div>
<div class="t" style="left:270.90px;transform-origin:0 0;top:171.23px;font-size:10px;line-height:12px;transform:scaleX(0.8151);color:#303030;-webkit-text-stroke:0.1px #303030;">Незастрахованн...</div>
<div class="t" style="left:349.10px;transform-origin:0 0;top:171.23px;font-size:10px;line-height:12px;transform:scaleX(0.8151);color:#303030;-webkit-text-stroke:0.1px #303030;">Банк &quot;Левобере...</div>
<div class="t" style="right:calc(100% - 496.70px);transform-origin:100% 0;top:171.23px;font-size:10px;line-height:12px;transform:scaleX(0.8151);color:#303030;-webkit-text-stroke:0.1px #303030;">92 436,00</div>
<svg class="ic" style="left:657.00px;top:169.11px" width="12" height="12" viewBox="0 0 12 12"><circle cx="6" cy="6" r="5.8" fill="#1e8f96"/><circle cx="6" cy="5.5" r="5" fill="#5cc8d0"/><ellipse cx="6" cy="4.4" rx="4" ry="3.2" fill="#8ee0e6"/><path d="M4.9 3.2 L8.2 5.6 L4.9 8 Z" fill="#6a6468"/><path d="M2.4 8.4 Q6 10.4 9.6 8.4" fill="none" stroke="#d0f4f6" stroke-width="0.7"/></svg>
<div class="t" style="left:670.10px;transform-origin:0 0;top:171.23px;font-size:10px;line-height:12px;transform:scaleX(0.8151);color:#303030;-webkit-text-stroke:0.1px #303030;">22.05.2025</div>
<div class="t" style="left:739.20px;transform-origin:0 0;top:171.23px;font-size:10px;line-height:12px;transform:scaleX(0.8151);color:#303030;-webkit-text-stroke:0.1px #303030;">(ВИЧ) Доплата з...</div>
<div class="t" style="left:-37.60px;transform-origin:0 0;top:186.94px;font-size:10px;line-height:12px;transform:scaleX(0.8151);color:#303030;-webkit-text-stroke:0.1px #303030;">26.05.2025</div>
<svg class="ic" style="left:33.20px;top:184.83px" width="12" height="12" viewBox="0 0 12 12"><circle cx="6" cy="6" r="5.8" fill="#4e9a2a"/><circle cx="6" cy="5.6" r="5" fill="#7cc24a"/><ellipse cx="6" cy="4.2" rx="3.8" ry="2.8" fill="#9ad46c"/><path d="M3.2 4.2 L5.6 6.4 L8.8 3.2" fill="none" stroke="#fff" stroke-width="1.5"/><path d="M2.6 8.2 Q6 10.2 9.4 8.2" fill="none" stroke="#e8f6dc" stroke-width="0.8"/></svg>
<div class="t" style="left:47.10px;transform-origin:0 0;top:186.94px;font-size:10px;line-height:12px;transform:scaleX(0.8151);color:#303030;-webkit-text-stroke:0.1px #303030;">471</div>
<div class="t" style="left:114.90px;transform-origin:0 0;top:186.94px;font-size:10px;line-height:12px;transform:scaleX(0.8151);color:#303030;-webkit-text-stroke:0.1px #303030;">26.05.2025</div>
<div class="t" style="left:193.00px;transform-origin:0 0;top:186.94px;font-size:10px;line-height:12px;transform:scaleX(0.8151);color:#303030;-webkit-text-stroke:0.1px #303030;">Платежная (Б)</div>
<div class="t" style="left:270.90px;transform-origin:0 0;top:186.94px;font-size:10px;line-height:12px;transform:scaleX(0.8151);color:#303030;-webkit-text-stroke:0.1px #303030;">МП в ФАП</div>
<div class="t" style="left:349.10px;transform-origin:0 0;top:186.94px;font-size:10px;line-height:12px;transform:scaleX(0.8151);color:#303030;-webkit-text-stroke:0.1px #303030;">Банк &quot;Левобере...</div>
<div class="t" style="right:calc(100% - 496.70px);transform-origin:100% 0;top:186.94px;font-size:10px;line-height:12px;transform:scaleX(0.8151);color:#303030;-webkit-text-stroke:0.1px #303030;">22 080,76</div>
<svg class="ic" style="left:657.00px;top:184.83px" width="12" height="12" viewBox="0 0 12 12"><circle cx="6" cy="6" r="5.8" fill="#1e8f96"/><circle cx="6" cy="5.5" r="5" fill="#5cc8d0"/><ellipse cx="6" cy="4.4" rx="4" ry="3.2" fill="#8ee0e6"/><path d="M4.9 3.2 L8.2 5.6 L4.9 8 Z" fill="#6a6468"/><path d="M2.4 8.4 Q6 10.4 9.6 8.4" fill="none" stroke="#d0f4f6" stroke-width="0.7"/></svg>
<div class="t" style="left:670.10px;transform-origin:0 0;top:186.94px;font-size:10px;line-height:12px;transform:scaleX(0.8151);color:#303030;-webkit-text-stroke:0.1px #303030;">26.05.2025</div>
<div class="t" style="left:739.20px;transform-origin:0 0;top:186.94px;font-size:10px;line-height:12px;transform:scaleX(0.8151);color:#303030;-webkit-text-stroke:0.1px #303030;">Доп. отпуск за н...</div>
<div class="t" style="left:-37.60px;transform-origin:0 0;top:202.66px;font-size:10px;line-height:12px;transform:scaleX(0.8151);color:#303030;-webkit-text-stroke:0.1px #303030;">26.05.2025</div>
<svg class="ic" style="left:33.20px;top:200.54px" width="12" height="12" viewBox="0 0 12 12"><circle cx="6" cy="6" r="5.8" fill="#4e9a2a"/><circle cx="6" cy="5.6" r="5" fill="#7cc24a"/><ellipse cx="6" cy="4.2" rx="3.8" ry="2.8" fill="#9ad46c"/><path d="M3.2 4.2 L5.6 6.4 L8.8 3.2" fill="none" stroke="#fff" stroke-width="1.5"/><path d="M2.6 8.2 Q6 10.2 9.4 8.2" fill="none" stroke="#e8f6dc" stroke-width="0.8"/></svg>
<div class="t" style="left:47.10px;transform-origin:0 0;top:202.66px;font-size:10px;line-height:12px;transform:scaleX(0.8151);color:#303030;-webkit-text-stroke:0.1px #303030;">472</div>
<div class="t" style="left:114.90px;transform-origin:0 0;top:202.66px;font-size:10px;line-height:12px;transform:scaleX(0.8151);color:#303030;-webkit-text-stroke:0.1px #303030;">26.05.2025</div>
<div class="t" style="left:193.00px;transform-origin:0 0;top:202.66px;font-size:10px;line-height:12px;transform:scaleX(0.8151);color:#303030;-webkit-text-stroke:0.1px #303030;">Платежная (Б)</div>
<div class="t" style="left:270.90px;transform-origin:0 0;top:202.66px;font-size:10px;line-height:12px;transform:scaleX(0.8151);color:#303030;-webkit-text-stroke:0.1px #303030;">МП в ФАП</div>
<div class="t" style="left:349.10px;transform-origin:0 0;top:202.66px;font-size:10px;line-height:12px;transform:scaleX(0.8151);color:#303030;-webkit-text-stroke:0.1px #303030;">Новосибирское ...</div>
<div class="t" style="right:calc(100% - 496.70px);transform-origin:100% 0;top:202.66px;font-size:10px;line-height:12px;transform:scaleX(0.8151);color:#303030;-webkit-text-stroke:0.1px #303030;">66 317,21</div>
<svg class="ic" style="left:657.00px;top:200.54px" width="12" height="12" viewBox="0 0 12 12"><circle cx="6" cy="6" r="5.8" fill="#1e8f96"/><circle cx="6" cy="5.5" r="5" fill="#5cc8d0"/><ellipse cx="6" cy="4.4" rx="4" ry="3.2" fill="#8ee0e6"/><path d="M4.9 3.2 L8.2 5.6 L4.9 8 Z" fill="#6a6468"/><path d="M2.4 8.4 Q6 10.4 9.6 8.4" fill="none" stroke="#d0f4f6" stroke-width="0.7"/></svg>
<div class="t" style="left:670.10px;transform-origin:0 0;top:202.66px;font-size:10px;line-height:12px;transform:scaleX(0.8151);color:#303030;-webkit-text-stroke:0.1px #303030;">26.05.2025</div>
<div class="t" style="left:739.20px;transform-origin:0 0;top:202.66px;font-size:10px;line-height:12px;transform:scaleX(0.8151);color:#303030;-webkit-text-stroke:0.1px #303030;">Доп. отпуск за н...</div>
<div class="t" style="left:-37.60px;transform-origin:0 0;top:218.38px;font-size:10px;line-height:12px;transform:scaleX(0.8151);color:#303030;-webkit-text-stroke:0.1px #303030;">19.05.2025</div>
<svg class="ic" style="left:33.20px;top:216.26px" width="12" height="12" viewBox="0 0 12 12"><circle cx="6" cy="6" r="5.8" fill="#4e9a2a"/><circle cx="6" cy="5.6" r="5" fill="#7cc24a"/><ellipse cx="6" cy="4.2" rx="3.8" ry="2.8" fill="#9ad46c"/><path d="M3.2 4.2 L5.6 6.4 L8.8 3.2" fill="none" stroke="#fff" stroke-width="1.5"/><path d="M2.6 8.2 Q6 10.2 9.4 8.2" fill="none" stroke="#e8f6dc" stroke-width="0.8"/></svg>
<div class="t" style="left:47.10px;transform-origin:0 0;top:218.38px;font-size:10px;line-height:12px;transform:scaleX(0.8151);color:#303030;-webkit-text-stroke:0.1px #303030;">473</div>
<div class="t" style="left:114.90px;transform-origin:0 0;top:218.38px;font-size:10px;line-height:12px;transform:scaleX(0.8151);color:#303030;-webkit-text-stroke:0.1px #303030;">19.05.2025</div>
<div class="t" style="left:193.00px;transform-origin:0 0;top:218.38px;font-size:10px;line-height:12px;transform:scaleX(0.8151);color:#303030;-webkit-text-stroke:0.1px #303030;">Платежная (Б)</div>
<div class="t" style="left:270.90px;transform-origin:0 0;top:218.38px;font-size:10px;line-height:12px;transform:scaleX(0.8151);color:#303030;-webkit-text-stroke:0.1px #303030;">ПоликлиникаОМС</div>
<div class="t" style="left:349.10px;transform-origin:0 0;top:218.38px;font-size:10px;line-height:12px;transform:scaleX(0.8151);color:#303030;-webkit-text-stroke:0.1px #303030;">Новосибирское ...</div>
<div class="t" style="right:calc(100% - 496.70px);transform-origin:100% 0;top:218.38px;font-size:10px;line-height:12px;transform:scaleX(0.8151);color:#303030;-webkit-text-stroke:0.1px #303030;">42 444,44</div>
<svg class="ic" style="left:657.00px;top:216.26px" width="12" height="12" viewBox="0 0 12 12"><circle cx="6" cy="6" r="5.8" fill="#1e8f96"/><circle cx="6" cy="5.5" r="5" fill="#5cc8d0"/><ellipse cx="6" cy="4.4" rx="4" ry="3.2" fill="#8ee0e6"/><path d="M4.9 3.2 L8.2 5.6 L4.9 8 Z" fill="#6a6468"/><path d="M2.4 8.4 Q6 10.4 9.6 8.4" fill="none" stroke="#d0f4f6" stroke-width="0.7"/></svg>
<div class="t" style="left:670.10px;transform-origin:0 0;top:218.38px;font-size:10px;line-height:12px;transform:scaleX(0.8151);color:#303030;-webkit-text-stroke:0.1px #303030;">26.05.2025</div>
<div class="t" style="left:739.20px;transform-origin:0 0;top:218.38px;font-size:10px;line-height:12px;transform:scaleX(0.8151);color:#303030;-webkit-text-stroke:0.1px #303030;">Доп. отпуск за н...</div>
<div class="t" style="left:-37.60px;transform-origin:0 0;top:234.09px;font-size:10px;line-height:12px;transform:scaleX(0.8151);color:#303030;-webkit-text-stroke:0.1px #303030;">26.05.2025</div>
<svg class="ic" style="left:33.20px;top:231.98px" width="12" height="12" viewBox="0 0 12 12"><circle cx="6" cy="6" r="5.8" fill="#4e9a2a"/><circle cx="6" cy="5.6" r="5" fill="#7cc24a"/><ellipse cx="6" cy="4.2" rx="3.8" ry="2.8" fill="#9ad46c"/><path d="M3.2 4.2 L5.6 6.4 L8.8 3.2" fill="none" stroke="#fff" stroke-width="1.5"/><path d="M2.6 8.2 Q6 10.2 9.4 8.2" fill="none" stroke="#e8f6dc" stroke-width="0.8"/></svg>
<div class="t" style="left:47.10px;transform-origin:0 0;top:234.09px;font-size:10px;line-height:12px;transform:scaleX(0.8151);color:#303030;-webkit-text-stroke:0.1px #303030;">474</div>
<div class="t" style="left:114.90px;transform-origin:0 0;top:234.09px;font-size:10px;line-height:12px;transform:scaleX(0.8151);color:#303030;-webkit-text-stroke:0.1px #303030;">26.05.2025</div>
<div class="t" style="left:193.00px;transform-origin:0 0;top:234.09px;font-size:10px;line-height:12px;transform:scaleX(0.8151);color:#303030;-webkit-text-stroke:0.1px #303030;">Платежная (Б)</div>
<div class="t" style="left:270.90px;transform-origin:0 0;top:234.09px;font-size:10px;line-height:12px;transform:scaleX(0.8151);color:#303030;-webkit-text-stroke:0.1px #303030;">ПоликлиникаОМС</div>
<div class="t" style="left:349.10px;transform-origin:0 0;top:234.09px;font-size:10px;line-height:12px;transform:scaleX(0.8151);color:#303030;-webkit-text-stroke:0.1px #303030;">Банк &quot;Левобере...</div>
<div class="t" style="right:calc(100% - 496.70px);transform-origin:100% 0;top:234.09px;font-size:10px;line-height:12px;transform:scaleX(0.8151);color:#303030;-webkit-text-stroke:0.1px #303030;">25 106,76</div>
<svg class="ic" style="left:657.00px;top:231.98px" width="12" height="12" viewBox="0 0 12 12"><circle cx="6" cy="6" r="5.8" fill="#1e8f96"/><circle cx="6" cy="5.5" r="5" fill="#5cc8d0"/><ellipse cx="6" cy="4.4" rx="4" ry="3.2" fill="#8ee0e6"/><path d="M4.9 3.2 L8.2 5.6 L4.9 8 Z" fill="#6a6468"/><path d="M2.4 8.4 Q6 10.4 9.6 8.4" fill="none" stroke="#d0f4f6" stroke-width="0.7"/></svg>
<div class="t" style="left:670.10px;transform-origin:0 0;top:234.09px;font-size:10px;line-height:12px;transform:scaleX(0.8151);color:#303030;-webkit-text-stroke:0.1px #303030;">26.05.2025</div>
<div class="t" style="left:739.20px;transform-origin:0 0;top:234.09px;font-size:10px;line-height:12px;transform:scaleX(0.8151);color:#303030;-webkit-text-stroke:0.1px #303030;">Доп. отпуск за н...</div>
<div class="t" style="left:-37.60px;transform-origin:0 0;top:249.81px;font-size:10px;line-height:12px;transform:scaleX(0.8151);color:#303030;-webkit-text-stroke:0.1px #303030;">26.05.2025</div>
<svg class="ic" style="left:33.20px;top:247.69px" width="12" height="12" viewBox="0 0 12 12"><circle cx="6" cy="6" r="5.8" fill="#4e9a2a"/><circle cx="6" cy="5.6" r="5" fill="#7cc24a"/><ellipse cx="6" cy="4.2" rx="3.8" ry="2.8" fill="#9ad46c"/><path d="M3.2 4.2 L5.6 6.4 L8.8 3.2" fill="none" stroke="#fff" stroke-width="1.5"/><path d="M2.6 8.2 Q6 10.2 9.4 8.2" fill="none" stroke="#e8f6dc" stroke-width="0.8"/></svg>
<div class="t" style="left:47.10px;transform-origin:0 0;top:249.81px;font-size:10px;line-height:12px;transform:scaleX(0.8151);color:#303030;-webkit-text-stroke:0.1px #303030;">475</div>
<div class="t" style="left:114.90px;transform-origin:0 0;top:249.81px;font-size:10px;line-height:12px;transform:scaleX(0.8151);color:#303030;-webkit-text-stroke:0.1px #303030;">26.05.2025</div>
<div class="t" style="left:193.00px;transform-origin:0 0;top:249.81px;font-size:10px;line-height:12px;transform:scaleX(0.8151);color:#303030;-webkit-text-stroke:0.1px #303030;">Платежная (Б)</div>
<div class="t" style="left:270.90px;transform-origin:0 0;top:249.81px;font-size:10px;line-height:12px;transform:scaleX(0.8151);color:#303030;-webkit-text-stroke:0.1px #303030;">СтационарОМС</div>
<div class="t" style="left:349.10px;transform-origin:0 0;top:249.81px;font-size:10px;line-height:12px;transform:scaleX(0.8151);color:#303030;-webkit-text-stroke:0.1px #303030;">Банк &quot;Левобере...</div>
<div class="t" style="right:calc(100% - 496.70px);transform-origin:100% 0;top:249.81px;font-size:10px;line-height:12px;transform:scaleX(0.8151);color:#303030;-webkit-text-stroke:0.1px #303030;">255 016,19</div>
<svg class="ic" style="left:657.00px;top:247.69px" width="12" height="12" viewBox="0 0 12 12"><circle cx="6" cy="6" r="5.8" fill="#1e8f96"/><circle cx="6" cy="5.5" r="5" fill="#5cc8d0"/><ellipse cx="6" cy="4.4" rx="4" ry="3.2" fill="#8ee0e6"/><path d="M4.9 3.2 L8.2 5.6 L4.9 8 Z" fill="#6a6468"/><path d="M2.4 8.4 Q6 10.4 9.6 8.4" fill="none" stroke="#d0f4f6" stroke-width="0.7"/></svg>
<div class="t" style="left:670.10px;transform-origin:0 0;top:249.81px;font-size:10px;line-height:12px;transform:scaleX(0.8151);color:#303030;-webkit-text-stroke:0.1px #303030;">26.05.2025</div>
<div class="t" style="left:739.20px;transform-origin:0 0;top:249.81px;font-size:10px;line-height:12px;transform:scaleX(0.8151);color:#303030;-webkit-text-stroke:0.1px #303030;">Доп. отпуск за н...</div>
<div class="t" style="left:-37.60px;transform-origin:0 0;top:265.52px;font-size:10px;line-height:12px;transform:scaleX(0.8151);color:#303030;-webkit-text-stroke:0.1px #303030;">26.05.2025</div>
<svg class="ic" style="left:33.20px;top:263.41px" width="12" height="12" viewBox="0 0 12 12"><circle cx="6" cy="6" r="5.8" fill="#4e9a2a"/><circle cx="6" cy="5.6" r="5" fill="#7cc24a"/><ellipse cx="6" cy="4.2" rx="3.8" ry="2.8" fill="#9ad46c"/><path d="M3.2 4.2 L5.6 6.4 L8.8 3.2" fill="none" stroke="#fff" stroke-width="1.5"/><path d="M2.6 8.2 Q6 10.2 9.4 8.2" fill="none" stroke="#e8f6dc" stroke-width="0.8"/></svg>
<div class="t" style="left:47.10px;transform-origin:0 0;top:265.52px;font-size:10px;line-height:12px;transform:scaleX(0.8151);color:#303030;-webkit-text-stroke:0.1px #303030;">476</div>
<div class="t" style="left:114.90px;transform-origin:0 0;top:265.52px;font-size:10px;line-height:12px;transform:scaleX(0.8151);color:#303030;-webkit-text-stroke:0.1px #303030;">26.05.2025</div>
<div class="t" style="left:193.00px;transform-origin:0 0;top:265.52px;font-size:10px;line-height:12px;transform:scaleX(0.8151);color:#303030;-webkit-text-stroke:0.1px #303030;">Платежная (Б)</div>
<div class="t" style="left:270.90px;transform-origin:0 0;top:265.52px;font-size:10px;line-height:12px;transform:scaleX(0.8151);color:#303030;-webkit-text-stroke:0.1px #303030;">СтационарОМС</div>
<div class="t" style="left:349.10px;transform-origin:0 0;top:265.52px;font-size:10px;line-height:12px;transform:scaleX(0.8151);color:#303030;-webkit-text-stroke:0.1px #303030;">Новосибирское ...</div>
<div class="t" style="right:calc(100% - 496.70px);transform-origin:100% 0;top:265.52px;font-size:10px;line-height:12px;transform:scaleX(0.8151);color:#303030;-webkit-text-stroke:0.1px #303030;">62 074,21</div>
<svg class="ic" style="left:657.00px;top:263.41px" width="12" height="12" viewBox="0 0 12 12"><circle cx="6" cy="6" r="5.8" fill="#1e8f96"/><circle cx="6" cy="5.5" r="5" fill="#5cc8d0"/><ellipse cx="6" cy="4.4" rx="4" ry="3.2" fill="#8ee0e6"/><path d="M4.9 3.2 L8.2 5.6 L4.9 8 Z" fill="#6a6468"/><path d="M2.4 8.4 Q6 10.4 9.6 8.4" fill="none" stroke="#d0f4f6" stroke-width="0.7"/></svg>
<div class="t" style="left:670.10px;transform-origin:0 0;top:265.52px;font-size:10px;line-height:12px;transform:scaleX(0.8151);color:#303030;-webkit-text-stroke:0.1px #303030;">26.05.2025</div>
<div class="t" style="left:739.20px;transform-origin:0 0;top:265.52px;font-size:10px;line-height:12px;transform:scaleX(0.8151);color:#303030;-webkit-text-stroke:0.1px #303030;">Доп. отпуск за н...</div>
<div class="t" style="left:-37.60px;transform-origin:0 0;top:281.24px;font-size:10px;line-height:12px;transform:scaleX(0.8151);color:#303030;-webkit-text-stroke:0.1px #303030;">26.05.2025</div>
<svg class="ic" style="left:33.20px;top:279.12px" width="12" height="12" viewBox="0 0 12 12"><circle cx="6" cy="6" r="5.8" fill="#4e9a2a"/><circle cx="6" cy="5.6" r="5" fill="#7cc24a"/><ellipse cx="6" cy="4.2" rx="3.8" ry="2.8" fill="#9ad46c"/><path d="M3.2 4.2 L5.6 6.4 L8.8 3.2" fill="none" stroke="#fff" stroke-width="1.5"/><path d="M2.6 8.2 Q6 10.2 9.4 8.2" fill="none" stroke="#e8f6dc" stroke-width="0.8"/></svg>
<div class="t" style="left:47.10px;transform-origin:0 0;top:281.24px;font-size:10px;line-height:12px;transform:scaleX(0.8151);color:#303030;-webkit-text-stroke:0.1px #303030;">477</div>
<div class="t" style="left:114.90px;transform-origin:0 0;top:281.24px;font-size:10px;line-height:12px;transform:scaleX(0.8151);color:#303030;-webkit-text-stroke:0.1px #303030;">26.05.2025</div>
<div class="t" style="left:193.00px;transform-origin:0 0;top:281.24px;font-size:10px;line-height:12px;transform:scaleX(0.8151);color:#303030;-webkit-text-stroke:0.1px #303030;">Платежная (Б)</div>
<div class="t" style="left:270.90px;transform-origin:0 0;top:281.24px;font-size:10px;line-height:12px;transform:scaleX(0.8151);color:#303030;-webkit-text-stroke:0.1px #303030;">СтоматологияОМС</div>
<div class="t" style="left:349.10px;transform-origin:0 0;top:281.24px;font-size:10px;line-height:12px;transform:scaleX(0.8151);color:#303030;-webkit-text-stroke:0.1px #303030;">Банк &quot;Левобере...</div>
<div class="t" style="right:calc(100% - 496.70px);transform-origin:100% 0;top:281.24px;font-size:10px;line-height:12px;transform:scaleX(0.8151);color:#303030;-webkit-text-stroke:0.1px #303030;">34 143,27</div>
<svg class="ic" style="left:657.00px;top:279.12px" width="12" height="12" viewBox="0 0 12 12"><circle cx="6" cy="6" r="5.8" fill="#1e8f96"/><circle cx="6" cy="5.5" r="5" fill="#5cc8d0"/><ellipse cx="6" cy="4.4" rx="4" ry="3.2" fill="#8ee0e6"/><path d="M4.9 3.2 L8.2 5.6 L4.9 8 Z" fill="#6a6468"/><path d="M2.4 8.4 Q6 10.4 9.6 8.4" fill="none" stroke="#d0f4f6" stroke-width="0.7"/></svg>
<div class="t" style="left:670.10px;transform-origin:0 0;top:281.24px;font-size:10px;line-height:12px;transform:scaleX(0.8151);color:#303030;-webkit-text-stroke:0.1px #303030;">26.05.2025</div>
<div class="t" style="left:739.20px;transform-origin:0 0;top:281.24px;font-size:10px;line-height:12px;transform:scaleX(0.8151);color:#303030;-webkit-text-stroke:0.1px #303030;">Доп. отпуск за н...</div>
<div class="t" style="left:-37.60px;transform-origin:0 0;top:296.95px;font-size:10px;line-height:12px;transform:scaleX(0.8151);color:#303030;-webkit-text-stroke:0.1px #303030;">28.05.2025</div>
<svg class="ic" style="left:33.20px;top:294.84px" width="12" height="12" viewBox="0 0 12 12"><circle cx="6" cy="6" r="5.8" fill="#4e9a2a"/><circle cx="6" cy="5.6" r="5" fill="#7cc24a"/><ellipse cx="6" cy="4.2" rx="3.8" ry="2.8" fill="#9ad46c"/><path d="M3.2 4.2 L5.6 6.4 L8.8 3.2" fill="none" stroke="#fff" stroke-width="1.5"/><path d="M2.6 8.2 Q6 10.2 9.4 8.2" fill="none" stroke="#e8f6dc" stroke-width="0.8"/></svg>
<div class="t" style="left:47.10px;transform-origin:0 0;top:296.95px;font-size:10px;line-height:12px;transform:scaleX(0.8151);color:#303030;-webkit-text-stroke:0.1px #303030;">478</div>
<div class="t" style="left:114.90px;transform-origin:0 0;top:296.95px;font-size:10px;line-height:12px;transform:scaleX(0.8151);color:#303030;-webkit-text-stroke:0.1px #303030;">28.05.2025</div>
<div class="t" style="left:193.00px;transform-origin:0 0;top:296.95px;font-size:10px;line-height:12px;transform:scaleX(0.8151);color:#303030;-webkit-text-stroke:0.1px #303030;">Платежная (Б)</div>
<div class="t" style="left:270.90px;transform-origin:0 0;top:296.95px;font-size:10px;line-height:12px;transform:scaleX(0.8151);color:#303030;-webkit-text-stroke:0.1px #303030;">ПоликлиникаОМС</div>
<div class="t" style="left:349.10px;transform-origin:0 0;top:296.95px;font-size:10px;line-height:12px;transform:scaleX(0.8151);color:#303030;-webkit-text-stroke:0.1px #303030;">Банк &quot;Левобере...</div>
<div class="t" style="right:calc(100% - 496.70px);transform-origin:100% 0;top:296.95px;font-size:10px;line-height:12px;transform:scaleX(0.8151);color:#303030;-webkit-text-stroke:0.1px #303030;">27 017,46</div>
<svg class="ic" style="left:657.00px;top:294.84px" width="12" height="12" viewBox="0 0 12 12"><circle cx="6" cy="6" r="5.8" fill="#1e8f96"/><circle cx="6" cy="5.5" r="5" fill="#5cc8d0"/><ellipse cx="6" cy="4.4" rx="4" ry="3.2" fill="#8ee0e6"/><path d="M4.9 3.2 L8.2 5.6 L4.9 8 Z" fill="#6a6468"/><path d="M2.4 8.4 Q6 10.4 9.6 8.4" fill="none" stroke="#d0f4f6" stroke-width="0.7"/></svg>
<div class="t" style="left:670.10px;transform-origin:0 0;top:296.95px;font-size:10px;line-height:12px;transform:scaleX(0.8151);color:#303030;-webkit-text-stroke:0.1px #303030;">28.05.2025</div>
<div class="t" style="left:739.20px;transform-origin:0 0;top:296.95px;font-size:10px;line-height:12px;transform:scaleX(0.8151);color:#303030;-webkit-text-stroke:0.1px #303030;">(ВИЧ) Доплата з...</div>
<div class="t" style="left:-37.60px;transform-origin:0 0;top:312.67px;font-size:10px;line-height:12px;transform:scaleX(0.8151);color:#303030;-webkit-text-stroke:0.1px #303030;">28.05.2025</div>
<svg class="ic" style="left:33.20px;top:310.56px" width="12" height="12" viewBox="0 0 12 12"><circle cx="6" cy="6" r="5.8" fill="#4e9a2a"/><circle cx="6" cy="5.6" r="5" fill="#7cc24a"/><ellipse cx="6" cy="4.2" rx="3.8" ry="2.8" fill="#9ad46c"/><path d="M3.2 4.2 L5.6 6.4 L8.8 3.2" fill="none" stroke="#fff" stroke-width="1.5"/><path d="M2.6 8.2 Q6 10.2 9.4 8.2" fill="none" stroke="#e8f6dc" stroke-width="0.8"/></svg>
<div class="t" style="left:47.10px;transform-origin:0 0;top:312.67px;font-size:10px;line-height:12px;transform:scaleX(0.8151);color:#303030;-webkit-text-stroke:0.1px #303030;">479</div>
<div class="t" style="left:114.90px;transform-origin:0 0;top:312.67px;font-size:10px;line-height:12px;transform:scaleX(0.8151);color:#303030;-webkit-text-stroke:0.1px #303030;">28.05.2025</div>
<div class="t" style="left:193.00px;transform-origin:0 0;top:312.67px;font-size:10px;line-height:12px;transform:scaleX(0.8151);color:#303030;-webkit-text-stroke:0.1px #303030;">Платежная (Б)</div>
<div class="t" style="left:270.90px;transform-origin:0 0;top:312.67px;font-size:10px;line-height:12px;transform:scaleX(0.8151);color:#303030;-webkit-text-stroke:0.1px #303030;">ПоликлиникаОМС</div>
<div class="t" style="left:349.10px;transform-origin:0 0;top:312.67px;font-size:10px;line-height:12px;transform:scaleX(0.8151);color:#303030;-webkit-text-stroke:0.1px #303030;">Новосибирское ...</div>
<div class="t" style="right:calc(100% - 496.70px);transform-origin:100% 0;top:312.67px;font-size:10px;line-height:12px;transform:scaleX(0.8151);color:#303030;-webkit-text-stroke:0.1px #303030;">19 132,07</div>
<svg class="ic" style="left:657.00px;top:310.56px" width="12" height="12" viewBox="0 0 12 12"><circle cx="6" cy="6" r="5.8" fill="#1e8f96"/><circle cx="6" cy="5.5" r="5" fill="#5cc8d0"/><ellipse cx="6" cy="4.4" rx="4" ry="3.2" fill="#8ee0e6"/><path d="M4.9 3.2 L8.2 5.6 L4.9 8 Z" fill="#6a6468"/><path d="M2.4 8.4 Q6 10.4 9.6 8.4" fill="none" stroke="#d0f4f6" stroke-width="0.7"/></svg>
<div class="t" style="left:670.10px;transform-origin:0 0;top:312.67px;font-size:10px;line-height:12px;transform:scaleX(0.8151);color:#303030;-webkit-text-stroke:0.1px #303030;">28.05.2025</div>
<div class="t" style="left:739.20px;transform-origin:0 0;top:312.67px;font-size:10px;line-height:12px;transform:scaleX(0.8151);color:#303030;-webkit-text-stroke:0.1px #303030;">(ВИЧ) Доплата з...</div>
<div class="t" style="left:-37.60px;transform-origin:0 0;top:328.39px;font-size:10px;line-height:12px;transform:scaleX(0.8151);color:#303030;-webkit-text-stroke:0.1px #303030;">29.05.2025</div>
<svg class="ic" style="left:33.20px;top:326.27px" width="12" height="12" viewBox="0 0 12 12"><circle cx="6" cy="6" r="5.8" fill="#4e9a2a"/><circle cx="6" cy="5.6" r="5" fill="#7cc24a"/><ellipse cx="6" cy="4.2" rx="3.8" ry="2.8" fill="#9ad46c"/><path d="M3.2 4.2 L5.6 6.4 L8.8 3.2" fill="none" stroke="#fff" stroke-width="1.5"/><path d="M2.6 8.2 Q6 10.2 9.4 8.2" fill="none" stroke="#e8f6dc" stroke-width="0.8"/></svg>
<div class="t" style="left:47.10px;transform-origin:0 0;top:328.39px;font-size:10px;line-height:12px;transform:scaleX(0.8151);color:#303030;-webkit-text-stroke:0.1px #303030;">481</div>
<div class="t" style="left:114.90px;transform-origin:0 0;top:328.39px;font-size:10px;line-height:12px;transform:scaleX(0.8151);color:#303030;-webkit-text-stroke:0.1px #303030;">29.05.2025</div>
<div class="t" style="left:193.00px;transform-origin:0 0;top:328.39px;font-size:10px;line-height:12px;transform:scaleX(0.8151);color:#303030;-webkit-text-stroke:0.1px #303030;">Платежная (Б)</div>
<div class="t" style="left:270.90px;transform-origin:0 0;top:328.39px;font-size:10px;line-height:12px;transform:scaleX(0.8151);color:#303030;-webkit-text-stroke:0.1px #303030;">ПоликлиникаОМС</div>
<div class="t" style="left:349.10px;transform-origin:0 0;top:328.39px;font-size:10px;line-height:12px;transform:scaleX(0.8151);color:#303030;-webkit-text-stroke:0.1px #303030;">Новосибирское ...</div>
<div class="t" style="right:calc(100% - 496.70px);transform-origin:100% 0;top:328.39px;font-size:10px;line-height:12px;transform:scaleX(0.8151);color:#303030;-webkit-text-stroke:0.1px #303030;">63,20</div>
<svg class="ic" style="left:657.00px;top:326.27px" width="12" height="12" viewBox="0 0 12 12"><circle cx="6" cy="6" r="5.8" fill="#1e8f96"/><circle cx="6" cy="5.5" r="5" fill="#5cc8d0"/><ellipse cx="6" cy="4.4" rx="4" ry="3.2" fill="#8ee0e6"/><path d="M4.9 3.2 L8.2 5.6 L4.9 8 Z" fill="#6a6468"/><path d="M2.4 8.4 Q6 10.4 9.6 8.4" fill="none" stroke="#d0f4f6" stroke-width="0.7"/></svg>
<div class="t" style="left:670.10px;transform-origin:0 0;top:328.39px;font-size:10px;line-height:12px;transform:scaleX(0.8151);color:#303030;-webkit-text-stroke:0.1px #303030;">29.05.2025</div>
<div class="t" style="left:739.20px;transform-origin:0 0;top:328.39px;font-size:10px;line-height:12px;transform:scaleX(0.8151);color:#303030;-webkit-text-stroke:0.1px #303030;">Дополнительны...</div>
<div class="t" style="left:-37.60px;transform-origin:0 0;top:344.10px;font-size:10px;line-height:12px;transform:scaleX(0.8151);color:#303030;-webkit-text-stroke:0.1px #303030;">29.05.2025</div>
<svg class="ic" style="left:33.20px;top:341.99px" width="12" height="12" viewBox="0 0 12 12"><circle cx="6" cy="6" r="5.8" fill="#4e9a2a"/><circle cx="6" cy="5.6" r="5" fill="#7cc24a"/><ellipse cx="6" cy="4.2" rx="3.8" ry="2.8" fill="#9ad46c"/><path d="M3.2 4.2 L5.6 6.4 L8.8 3.2" fill="none" stroke="#fff" stroke-width="1.5"/><path d="M2.6 8.2 Q6 10.2 9.4 8.2" fill="none" stroke="#e8f6dc" stroke-width="0.8"/></svg>
<div class="t" style="left:47.10px;transform-origin:0 0;top:344.10px;font-size:10px;line-height:12px;transform:scaleX(0.8151);color:#303030;-webkit-text-stroke:0.1px #303030;">482</div>
<div class="t" style="left:114.90px;transform-origin:0 0;top:344.10px;font-size:10px;line-height:12px;transform:scaleX(0.8151);color:#303030;-webkit-text-stroke:0.1px #303030;">29.05.2025</div>
<div class="t" style="left:193.00px;transform-origin:0 0;top:344.10px;font-size:10px;line-height:12px;transform:scaleX(0.8151);color:#303030;-webkit-text-stroke:0.1px #303030;">Платежная (Б)</div>
<div class="t" style="left:270.90px;transform-origin:0 0;top:344.10px;font-size:10px;line-height:12px;transform:scaleX(0.8151);color:#303030;-webkit-text-stroke:0.1px #303030;">СтационарОМС</div>
<div class="t" style="left:349.10px;transform-origin:0 0;top:344.10px;font-size:10px;line-height:12px;transform:scaleX(0.8151);color:#303030;-webkit-text-stroke:0.1px #303030;">Новосибирское ...</div>
<div class="t" style="right:calc(100% - 496.70px);transform-origin:100% 0;top:344.10px;font-size:10px;line-height:12px;transform:scaleX(0.8151);color:#303030;-webkit-text-stroke:0.1px #303030;">72 753,67</div>
<svg class="ic" style="left:657.00px;top:341.99px" width="12" height="12" viewBox="0 0 12 12"><circle cx="6" cy="6" r="5.8" fill="#1e8f96"/><circle cx="6" cy="5.5" r="5" fill="#5cc8d0"/><ellipse cx="6" cy="4.4" rx="4" ry="3.2" fill="#8ee0e6"/><path d="M4.9 3.2 L8.2 5.6 L4.9 8 Z" fill="#6a6468"/><path d="M2.4 8.4 Q6 10.4 9.6 8.4" fill="none" stroke="#d0f4f6" stroke-width="0.7"/></svg>
<div class="t" style="left:670.10px;transform-origin:0 0;top:344.10px;font-size:10px;line-height:12px;transform:scaleX(0.8151);color:#303030;-webkit-text-stroke:0.1px #303030;">29.05.2025</div>
<div class="t" style="left:739.20px;transform-origin:0 0;top:344.10px;font-size:10px;line-height:12px;transform:scaleX(0.8151);color:#303030;-webkit-text-stroke:0.1px #303030;">(ВИЧ) Доплата з...</div>
<div class="t" style="left:-37.60px;transform-origin:0 0;top:359.82px;font-size:10px;line-height:12px;transform:scaleX(0.8151);color:#303030;-webkit-text-stroke:0.1px #303030;">29.05.2025</div>
<svg class="ic" style="left:33.20px;top:357.70px" width="12" height="12" viewBox="0 0 12 12"><circle cx="6" cy="6" r="5.8" fill="#4e9a2a"/><circle cx="6" cy="5.6" r="5" fill="#7cc24a"/><ellipse cx="6" cy="4.2" rx="3.8" ry="2.8" fill="#9ad46c"/><path d="M3.2 4.2 L5.6 6.4 L8.8 3.2" fill="none" stroke="#fff" stroke-width="1.5"/><path d="M2.6 8.2 Q6 10.2 9.4 8.2" fill="none" stroke="#e8f6dc" stroke-width="0.8"/></svg>
<div class="t" style="left:47.10px;transform-origin:0 0;top:359.82px;font-size:10px;line-height:12px;transform:scaleX(0.8151);color:#303030;-webkit-text-stroke:0.1px #303030;">483</div>
<div class="t" style="left:114.90px;transform-origin:0 0;top:359.82px;font-size:10px;line-height:12px;transform:scaleX(0.8151);color:#303030;-webkit-text-stroke:0.1px #303030;">29.05.2025</div>
<div class="t" style="left:193.00px;transform-origin:0 0;top:359.82px;font-size:10px;line-height:12px;transform:scaleX(0.8151);color:#303030;-webkit-text-stroke:0.1px #303030;">Платежная (Б)</div>
<div class="t" style="left:270.90px;transform-origin:0 0;top:359.82px;font-size:10px;line-height:12px;transform:scaleX(0.8151);color:#303030;-webkit-text-stroke:0.1px #303030;">Платные медиц...</div>
<div class="t" style="left:349.10px;transform-origin:0 0;top:359.82px;font-size:10px;line-height:12px;transform:scaleX(0.8151);color:#303030;-webkit-text-stroke:0.1px #303030;">Новосибирское ...</div>
<div class="t" style="right:calc(100% - 496.70px);transform-origin:100% 0;top:359.82px;font-size:10px;line-height:12px;transform:scaleX(0.8151);color:#303030;-webkit-text-stroke:0.1px #303030;">569,43</div>
<svg class="ic" style="left:657.00px;top:357.70px" width="12" height="12" viewBox="0 0 12 12"><circle cx="6" cy="6" r="5.8" fill="#1e8f96"/><circle cx="6" cy="5.5" r="5" fill="#5cc8d0"/><ellipse cx="6" cy="4.4" rx="4" ry="3.2" fill="#8ee0e6"/><path d="M4.9 3.2 L8.2 5.6 L4.9 8 Z" fill="#6a6468"/><path d="M2.4 8.4 Q6 10.4 9.6 8.4" fill="none" stroke="#d0f4f6" stroke-width="0.7"/></svg>
<div class="t" style="left:670.10px;transform-origin:0 0;top:359.82px;font-size:10px;line-height:12px;transform:scaleX(0.8151);color:#303030;-webkit-text-stroke:0.1px #303030;">29.05.2025</div>
<div class="t" style="left:739.20px;transform-origin:0 0;top:359.82px;font-size:10px;line-height:12px;transform:scaleX(0.8151);color:#303030;-webkit-text-stroke:0.1px #303030;">(ВИЧ) Доплата з...</div>
<div class="t" style="left:-37.60px;transform-origin:0 0;top:375.53px;font-size:10px;line-height:12px;transform:scaleX(0.8151);color:#303030;-webkit-text-stroke:0.1px #303030;">30.05.2025</div>
<svg class="ic" style="left:33.20px;top:373.42px" width="12" height="12" viewBox="0 0 12 12"><circle cx="6" cy="6" r="5.8" fill="#4e9a2a"/><circle cx="6" cy="5.6" r="5" fill="#7cc24a"/><ellipse cx="6" cy="4.2" rx="3.8" ry="2.8" fill="#9ad46c"/><path d="M3.2 4.2 L5.6 6.4 L8.8 3.2" fill="none" stroke="#fff" stroke-width="1.5"/><path d="M2.6 8.2 Q6 10.2 9.4 8.2" fill="none" stroke="#e8f6dc" stroke-width="0.8"/></svg>
<div class="t" style="left:47.10px;transform-origin:0 0;top:375.53px;font-size:10px;line-height:12px;transform:scaleX(0.8151);color:#303030;-webkit-text-stroke:0.1px #303030;">493</div>
<div class="t" style="left:114.90px;transform-origin:0 0;top:375.53px;font-size:10px;line-height:12px;transform:scaleX(0.8151);color:#303030;-webkit-text-stroke:0.1px #303030;">30.05.2025</div>
<div class="t" style="left:193.00px;transform-origin:0 0;top:375.53px;font-size:10px;line-height:12px;transform:scaleX(0.8151);color:#303030;-webkit-text-stroke:0.1px #303030;">Расчетно-плате...</div>
<div class="t" style="left:270.90px;transform-origin:0 0;top:375.53px;font-size:10px;line-height:12px;transform:scaleX(0.8151);color:#303030;-webkit-text-stroke:0.1px #303030;">ДневСтационар...</div>
<div class="t" style="left:349.10px;transform-origin:0 0;top:375.53px;font-size:10px;line-height:12px;transform:scaleX(0.8151);color:#303030;-webkit-text-stroke:0.1px #303030;">Новосибирское ...</div>
<div class="t" style="right:calc(100% - 496.70px);transform-origin:100% 0;top:375.53px;font-size:10px;line-height:12px;transform:scaleX(0.8151);color:#303030;-webkit-text-stroke:0.1px #303030;">15 225,00</div>
<svg class="ic" style="left:657.00px;top:373.42px" width="12" height="12" viewBox="0 0 12 12"><circle cx="6" cy="6" r="5.35" fill="#ededed" stroke="#7a7a7a" stroke-width="0.9"/><path d="M1.2 7.2 A5 5 0 0 0 10.8 7.2" fill="none" stroke="#4a4a4a" stroke-width="0.9"/><ellipse cx="6" cy="4.6" rx="3.6" ry="3" fill="#f8f8f8"/><path d="M4.1 3 h1.2 v3.8 a0.6 0.8 0 0 1 -1.2 0 Z" fill="#2e2e2e"/><path d="M6.9 3 h1.2 v3.8 a0.6 0.8 0 0 1 -1.2 0 Z" fill="#2e2e2e"/></svg>
<div class="t" style="left:-37.60px;transform-origin:0 0;top:391.25px;font-size:10px;line-height:12px;transform:scaleX(0.8151);color:#303030;-webkit-text-stroke:0.1px #303030;">30.05.2025</div>
<svg class="ic" style="left:33.20px;top:389.14px" width="12" height="12" viewBox="0 0 12 12"><circle cx="6" cy="6" r="5.8" fill="#4e9a2a"/><circle cx="6" cy="5.6" r="5" fill="#7cc24a"/><ellipse cx="6" cy="4.2" rx="3.8" ry="2.8" fill="#9ad46c"/><path d="M3.2 4.2 L5.6 6.4 L8.8 3.2" fill="none" stroke="#fff" stroke-width="1.5"/><path d="M2.6 8.2 Q6 10.2 9.4 8.2" fill="none" stroke="#e8f6dc" stroke-width="0.8"/></svg>
<div class="t" style="left:47.10px;transform-origin:0 0;top:391.25px;font-size:10px;line-height:12px;transform:scaleX(0.8151);color:#303030;-webkit-text-stroke:0.1px #303030;">494</div>
<div class="t" style="left:114.90px;transform-origin:0 0;top:391.25px;font-size:10px;line-height:12px;transform:scaleX(0.8151);color:#303030;-webkit-text-stroke:0.1px #303030;">30.05.2025</div>
<div class="t" style="left:193.00px;transform-origin:0 0;top:391.25px;font-size:10px;line-height:12px;transform:scaleX(0.8151);color:#303030;-webkit-text-stroke:0.1px #303030;">Расчетно-плате...</div>
<div class="t" style="left:270.90px;transform-origin:0 0;top:391.25px;font-size:10px;line-height:12px;transform:scaleX(0.8151);color:#303030;-webkit-text-stroke:0.1px #303030;">ДневСтационар...</div>
<div class="t" style="left:349.10px;transform-origin:0 0;top:391.25px;font-size:10px;line-height:12px;transform:scaleX(0.8151);color:#303030;-webkit-text-stroke:0.1px #303030;">Банк &quot;Левобере...</div>
<div class="t" style="right:calc(100% - 496.70px);transform-origin:100% 0;top:391.25px;font-size:10px;line-height:12px;transform:scaleX(0.8151);color:#303030;-webkit-text-stroke:0.1px #303030;">63 091,00</div>
<svg class="ic" style="left:657.00px;top:389.14px" width="12" height="12" viewBox="0 0 12 12"><circle cx="6" cy="6" r="5.35" fill="#ededed" stroke="#7a7a7a" stroke-width="0.9"/><path d="M1.2 7.2 A5 5 0 0 0 10.8 7.2" fill="none" stroke="#4a4a4a" stroke-width="0.9"/><ellipse cx="6" cy="4.6" rx="3.6" ry="3" fill="#f8f8f8"/><path d="M4.1 3 h1.2 v3.8 a0.6 0.8 0 0 1 -1.2 0 Z" fill="#2e2e2e"/><path d="M6.9 3 h1.2 v3.8 a0.6 0.8 0 0 1 -1.2 0 Z" fill="#2e2e2e"/></svg>
<div class="t" style="left:-37.60px;transform-origin:0 0;top:406.97px;font-size:10px;line-height:12px;transform:scaleX(0.8151);color:#303030;-webkit-text-stroke:0.1px #303030;">30.05.2025</div>
<svg class="ic" style="left:33.20px;top:404.85px" width="12" height="12" viewBox="0 0 12 12"><circle cx="6" cy="6" r="5.8" fill="#4e9a2a"/><circle cx="6" cy="5.6" r="5" fill="#7cc24a"/><ellipse cx="6" cy="4.2" rx="3.8" ry="2.8" fill="#9ad46c"/><path d="M3.2 4.2 L5.6 6.4 L8.8 3.2" fill="none" stroke="#fff" stroke-width="1.5"/><path d="M2.6 8.2 Q6 10.2 9.4 8.2" fill="none" stroke="#e8f6dc" stroke-width="0.8"/></svg>
<div class="t" style="left:47.10px;transform-origin:0 0;top:406.97px;font-size:10px;line-height:12px;transform:scaleX(0.8151);color:#303030;-webkit-text-stroke:0.1px #303030;">495</div>
<div class="t" style="left:114.90px;transform-origin:0 0;top:406.97px;font-size:10px;line-height:12px;transform:scaleX(0.8151);color:#303030;-webkit-text-stroke:0.1px #303030;">30.05.2025</div>
<div class="t" style="left:193.00px;transform-origin:0 0;top:406.97px;font-size:10px;line-height:12px;transform:scaleX(0.8151);color:#303030;-webkit-text-stroke:0.1px #303030;">Расчетно-плате...</div>
<div class="t" style="left:270.90px;transform-origin:0 0;top:406.97px;font-size:10px;line-height:12px;transform:scaleX(0.8151);color:#303030;-webkit-text-stroke:0.1px #303030;">МП в ФАП</div>
<div class="t" style="left:349.10px;transform-origin:0 0;top:406.97px;font-size:10px;line-height:12px;transform:scaleX(0.8151);color:#303030;-webkit-text-stroke:0.1px #303030;">Новосибирское ...</div>
<div class="t" style="right:calc(100% - 496.70px);transform-origin:100% 0;top:406.97px;font-size:10px;line-height:12px;transform:scaleX(0.8151);color:#303030;-webkit-text-stroke:0.1px #303030;">233 659,93</div>
<svg class="ic" style="left:657.00px;top:404.85px" width="12" height="12" viewBox="0 0 12 12"><circle cx="6" cy="6" r="5.35" fill="#ededed" stroke="#7a7a7a" stroke-width="0.9"/><path d="M1.2 7.2 A5 5 0 0 0 10.8 7.2" fill="none" stroke="#4a4a4a" stroke-width="0.9"/><ellipse cx="6" cy="4.6" rx="3.6" ry="3" fill="#f8f8f8"/><path d="M4.1 3 h1.2 v3.8 a0.6 0.8 0 0 1 -1.2 0 Z" fill="#2e2e2e"/><path d="M6.9 3 h1.2 v3.8 a0.6 0.8 0 0 1 -1.2 0 Z" fill="#2e2e2e"/></svg>
<div class="t" style="left:-37.60px;transform-origin:0 0;top:422.68px;font-size:10px;line-height:12px;transform:scaleX(0.8151);color:#303030;-webkit-text-stroke:0.1px #303030;">30.05.2025</div>
<svg class="ic" style="left:33.20px;top:420.57px" width="12" height="12" viewBox="0 0 12 12"><circle cx="6" cy="6" r="5.8" fill="#4e9a2a"/><circle cx="6" cy="5.6" r="5" fill="#7cc24a"/><ellipse cx="6" cy="4.2" rx="3.8" ry="2.8" fill="#9ad46c"/><path d="M3.2 4.2 L5.6 6.4 L8.8 3.2" fill="none" stroke="#fff" stroke-width="1.5"/><path d="M2.6 8.2 Q6 10.2 9.4 8.2" fill="none" stroke="#e8f6dc" stroke-width="0.8"/></svg>
<div class="t" style="left:47.10px;transform-origin:0 0;top:422.68px;font-size:10px;line-height:12px;transform:scaleX(0.8151);color:#303030;-webkit-text-stroke:0.1px #303030;">496</div>
<div class="t" style="left:114.90px;transform-origin:0 0;top:422.68px;font-size:10px;line-height:12px;transform:scaleX(0.8151);color:#303030;-webkit-text-stroke:0.1px #303030;">30.05.2025</div>
<div class="t" style="left:193.00px;transform-origin:0 0;top:422.68px;font-size:10px;line-height:12px;transform:scaleX(0.8151);color:#303030;-webkit-text-stroke:0.1px #303030;">Расчетно-плате...</div>
<div class="t" style="left:270.90px;transform-origin:0 0;top:422.68px;font-size:10px;line-height:12px;transform:scaleX(0.8151);color:#303030;-webkit-text-stroke:0.1px #303030;">МП в ФАП</div>
<div class="t" style="left:349.10px;transform-origin:0 0;top:422.68px;font-size:10px;line-height:12px;transform:scaleX(0.8151);color:#303030;-webkit-text-stroke:0.1px #303030;">Банк &quot;Левобере...</div>
<div class="t" style="right:calc(100% - 496.70px);transform-origin:100% 0;top:422.68px;font-size:10px;line-height:12px;transform:scaleX(0.8151);color:#303030;-webkit-text-stroke:0.1px #303030;">430 372,85</div>
<svg class="ic" style="left:657.00px;top:420.57px" width="12" height="12" viewBox="0 0 12 12"><circle cx="6" cy="6" r="5.35" fill="#ededed" stroke="#7a7a7a" stroke-width="0.9"/><path d="M1.2 7.2 A5 5 0 0 0 10.8 7.2" fill="none" stroke="#4a4a4a" stroke-width="0.9"/><ellipse cx="6" cy="4.6" rx="3.6" ry="3" fill="#f8f8f8"/><path d="M4.1 3 h1.2 v3.8 a0.6 0.8 0 0 1 -1.2 0 Z" fill="#2e2e2e"/><path d="M6.9 3 h1.2 v3.8 a0.6 0.8 0 0 1 -1.2 0 Z" fill="#2e2e2e"/></svg>
<div class="t" style="left:-37.60px;transform-origin:0 0;top:438.40px;font-size:10px;line-height:12px;transform:scaleX(0.8151);color:#303030;-webkit-text-stroke:0.1px #303030;">30.05.2025</div>
<svg class="ic" style="left:33.20px;top:436.28px" width="12" height="12" viewBox="0 0 12 12"><circle cx="6" cy="6" r="5.8" fill="#4e9a2a"/><circle cx="6" cy="5.6" r="5" fill="#7cc24a"/><ellipse cx="6" cy="4.2" rx="3.8" ry="2.8" fill="#9ad46c"/><path d="M3.2 4.2 L5.6 6.4 L8.8 3.2" fill="none" stroke="#fff" stroke-width="1.5"/><path d="M2.6 8.2 Q6 10.2 9.4 8.2" fill="none" stroke="#e8f6dc" stroke-width="0.8"/></svg>
<div class="t" style="left:47.10px;transform-origin:0 0;top:438.40px;font-size:10px;line-height:12px;transform:scaleX(0.8151);color:#303030;-webkit-text-stroke:0.1px #303030;">497</div>
<div class="t" style="left:114.90px;transform-origin:0 0;top:438.40px;font-size:10px;line-height:12px;transform:scaleX(0.8151);color:#303030;-webkit-text-stroke:0.1px #303030;">30.05.2025</div>
<div class="t" style="left:193.00px;transform-origin:0 0;top:438.40px;font-size:10px;line-height:12px;transform:scaleX(0.8151);color:#303030;-webkit-text-stroke:0.1px #303030;">Расчетно-плате...</div>
<div class="t" style="left:270.90px;transform-origin:0 0;top:438.40px;font-size:10px;line-height:12px;transform:scaleX(0.8151);color:#303030;-webkit-text-stroke:0.1px #303030;">МП в ФАП</div>
<div class="t" style="left:349.10px;transform-origin:0 0;top:438.40px;font-size:10px;line-height:12px;transform:scaleX(0.8151);color:#303030;-webkit-text-stroke:0.1px #303030;">Новосибирское ...</div>
<div class="t" style="right:calc(100% - 496.70px);transform-origin:100% 0;top:438.40px;font-size:10px;line-height:12px;transform:scaleX(0.8151);color:#303030;-webkit-text-stroke:0.1px #303030;">6 093,65</div>
<svg class="ic" style="left:657.00px;top:436.28px" width="12" height="12" viewBox="0 0 12 12"><circle cx="6" cy="6" r="5.35" fill="#ededed" stroke="#7a7a7a" stroke-width="0.9"/><path d="M1.2 7.2 A5 5 0 0 0 10.8 7.2" fill="none" stroke="#4a4a4a" stroke-width="0.9"/><ellipse cx="6" cy="4.6" rx="3.6" ry="3" fill="#f8f8f8"/><path d="M4.1 3 h1.2 v3.8 a0.6 0.8 0 0 1 -1.2 0 Z" fill="#2e2e2e"/><path d="M6.9 3 h1.2 v3.8 a0.6 0.8 0 0 1 -1.2 0 Z" fill="#2e2e2e"/></svg>
<div class="t" style="left:-37.60px;transform-origin:0 0;top:454.11px;font-size:10px;line-height:12px;transform:scaleX(0.8151);color:#303030;-webkit-text-stroke:0.1px #303030;">30.05.2025</div>
<svg class="ic" style="left:33.20px;top:452.00px" width="12" height="12" viewBox="0 0 12 12"><circle cx="6" cy="6" r="5.8" fill="#4e9a2a"/><circle cx="6" cy="5.6" r="5" fill="#7cc24a"/><ellipse cx="6" cy="4.2" rx="3.8" ry="2.8" fill="#9ad46c"/><path d="M3.2 4.2 L5.6 6.4 L8.8 3.2" fill="none" stroke="#fff" stroke-width="1.5"/><path d="M2.6 8.2 Q6 10.2 9.4 8.2" fill="none" stroke="#e8f6dc" stroke-width="0.8"/></svg>
<div class="t" style="left:47.10px;transform-origin:0 0;top:454.11px;font-size:10px;line-height:12px;transform:scaleX(0.8151);color:#303030;-webkit-text-stroke:0.1px #303030;">498</div>
<div class="t" style="left:114.90px;transform-origin:0 0;top:454.11px;font-size:10px;line-height:12px;transform:scaleX(0.8151);color:#303030;-webkit-text-stroke:0.1px #303030;">30.05.2025</div>
<div class="t" style="left:193.00px;transform-origin:0 0;top:454.11px;font-size:10px;line-height:12px;transform:scaleX(0.8151);color:#303030;-webkit-text-stroke:0.1px #303030;">Расчетно-плате...</div>
<div class="t" style="left:270.90px;transform-origin:0 0;top:454.11px;font-size:10px;line-height:12px;transform:scaleX(0.8151);color:#303030;-webkit-text-stroke:0.1px #303030;">МП в ФАП</div>
<div class="t" style="left:349.10px;transform-origin:0 0;top:454.11px;font-size:10px;line-height:12px;transform:scaleX(0.8151);color:#303030;-webkit-text-stroke:0.1px #303030;">Банк &quot;Левобере...</div>
<div class="t" style="right:calc(100% - 496.70px);transform-origin:100% 0;top:454.11px;font-size:10px;line-height:12px;transform:scaleX(0.8151);color:#303030;-webkit-text-stroke:0.1px #303030;">3 813,52</div>
<svg class="ic" style="left:657.00px;top:452.00px" width="12" height="12" viewBox="0 0 12 12"><circle cx="6" cy="6" r="5.35" fill="#ededed" stroke="#7a7a7a" stroke-width="0.9"/><path d="M1.2 7.2 A5 5 0 0 0 10.8 7.2" fill="none" stroke="#4a4a4a" stroke-width="0.9"/><ellipse cx="6" cy="4.6" rx="3.6" ry="3" fill="#f8f8f8"/><path d="M4.1 3 h1.2 v3.8 a0.6 0.8 0 0 1 -1.2 0 Z" fill="#2e2e2e"/><path d="M6.9 3 h1.2 v3.8 a0.6 0.8 0 0 1 -1.2 0 Z" fill="#2e2e2e"/></svg>
<div class="t" style="left:-37.60px;transform-origin:0 0;top:469.83px;font-size:10px;line-height:12px;transform:scaleX(0.8151);color:#303030;-webkit-text-stroke:0.1px #303030;">30.05.2025</div>
<svg class="ic" style="left:33.20px;top:467.72px" width="12" height="12" viewBox="0 0 12 12"><circle cx="6" cy="6" r="5.8" fill="#4e9a2a"/><circle cx="6" cy="5.6" r="5" fill="#7cc24a"/><ellipse cx="6" cy="4.2" rx="3.8" ry="2.8" fill="#9ad46c"/><path d="M3.2 4.2 L5.6 6.4 L8.8 3.2" fill="none" stroke="#fff" stroke-width="1.5"/><path d="M2.6 8.2 Q6 10.2 9.4 8.2" fill="none" stroke="#e8f6dc" stroke-width="0.8"/></svg>
<div class="t" style="left:47.10px;transform-origin:0 0;top:469.83px;font-size:10px;line-height:12px;transform:scaleX(0.8151);color:#303030;-webkit-text-stroke:0.1px #303030;">499</div>
<div class="t" style="left:114.90px;transform-origin:0 0;top:469.83px;font-size:10px;line-height:12px;transform:scaleX(0.8151);color:#303030;-webkit-text-stroke:0.1px #303030;">30.05.2025</div>
<div class="t" style="left:193.00px;transform-origin:0 0;top:469.83px;font-size:10px;line-height:12px;transform:scaleX(0.8151);color:#303030;-webkit-text-stroke:0.1px #303030;">Расчетно-плате...</div>
<div class="t" style="left:270.90px;transform-origin:0 0;top:469.83px;font-size:10px;line-height:12px;transform:scaleX(0.8151);color:#303030;-webkit-text-stroke:0.1px #303030;">Оказание скоро...</div>
<div class="t" style="left:349.10px;transform-origin:0 0;top:469.83px;font-size:10px;line-height:12px;transform:scaleX(0.8151);color:#303030;-webkit-text-stroke:0.1px #303030;">Новосибирское ...</div>
<div class="t" style="right:calc(100% - 496.70px);transform-origin:100% 0;top:469.83px;font-size:10px;line-height:12px;transform:scaleX(0.8151);color:#303030;-webkit-text-stroke:0.1px #303030;">490 167,24</div>
<svg class="ic" style="left:657.00px;top:467.72px" width="12" height="12" viewBox="0 0 12 12"><circle cx="6" cy="6" r="5.35" fill="#ededed" stroke="#7a7a7a" stroke-width="0.9"/><path d="M1.2 7.2 A5 5 0 0 0 10.8 7.2" fill="none" stroke="#4a4a4a" stroke-width="0.9"/><ellipse cx="6" cy="4.6" rx="3.6" ry="3" fill="#f8f8f8"/><path d="M4.1 3 h1.2 v3.8 a0.6 0.8 0 0 1 -1.2 0 Z" fill="#2e2e2e"/><path d="M6.9 3 h1.2 v3.8 a0.6 0.8 0 0 1 -1.2 0 Z" fill="#2e2e2e"/></svg>
<div class="t" style="left:-37.60px;transform-origin:0 0;top:485.55px;font-size:10px;line-height:12px;transform:scaleX(0.8151);color:#303030;-webkit-text-stroke:0.1px #303030;">30.05.2025</div>
<svg class="ic" style="left:33.20px;top:483.43px" width="12" height="12" viewBox="0 0 12 12"><circle cx="6" cy="6" r="5.8" fill="#4e9a2a"/><circle cx="6" cy="5.6" r="5" fill="#7cc24a"/><ellipse cx="6" cy="4.2" rx="3.8" ry="2.8" fill="#9ad46c"/><path d="M3.2 4.2 L5.6 6.4 L8.8 3.2" fill="none" stroke="#fff" stroke-width="1.5"/><path d="M2.6 8.2 Q6 10.2 9.4 8.2" fill="none" stroke="#e8f6dc" stroke-width="0.8"/></svg>
<div class="t" style="left:47.10px;transform-origin:0 0;top:485.55px;font-size:10px;line-height:12px;transform:scaleX(0.8151);color:#303030;-webkit-text-stroke:0.1px #303030;">500</div>
<div class="t" style="left:114.90px;transform-origin:0 0;top:485.55px;font-size:10px;line-height:12px;transform:scaleX(0.8151);color:#303030;-webkit-text-stroke:0.1px #303030;">30.05.2025</div>
<div class="t" style="left:193.00px;transform-origin:0 0;top:485.55px;font-size:10px;line-height:12px;transform:scaleX(0.8151);color:#303030;-webkit-text-stroke:0.1px #303030;">Расчетно-плате...</div>
<div class="t" style="left:270.90px;transform-origin:0 0;top:485.55px;font-size:10px;line-height:12px;transform:scaleX(0.8151);color:#303030;-webkit-text-stroke:0.1px #303030;">Оказание скоро...</div>
<div class="t" style="left:349.10px;transform-origin:0 0;top:485.55px;font-size:10px;line-height:12px;transform:scaleX(0.8151);color:#303030;-webkit-text-stroke:0.1px #303030;">Банк &quot;Левобере...</div>
<div class="t" style="right:calc(100% - 496.70px);transform-origin:100% 0;top:485.55px;font-size:10px;line-height:12px;transform:scaleX(0.8151);color:#303030;-webkit-text-stroke:0.1px #303030;">240 420,43</div>
<svg class="ic" style="left:657.00px;top:483.43px" width="12" height="12" viewBox="0 0 12 12"><circle cx="6" cy="6" r="5.35" fill="#ededed" stroke="#7a7a7a" stroke-width="0.9"/><path d="M1.2 7.2 A5 5 0 0 0 10.8 7.2" fill="none" stroke="#4a4a4a" stroke-width="0.9"/><ellipse cx="6" cy="4.6" rx="3.6" ry="3" fill="#f8f8f8"/><path d="M4.1 3 h1.2 v3.8 a0.6 0.8 0 0 1 -1.2 0 Z" fill="#2e2e2e"/><path d="M6.9 3 h1.2 v3.8 a0.6 0.8 0 0 1 -1.2 0 Z" fill="#2e2e2e"/></svg>
<div class="t" style="left:-37.60px;transform-origin:0 0;top:501.26px;font-size:10px;line-height:12px;transform:scaleX(0.8151);color:#303030;-webkit-text-stroke:0.1px #303030;">30.05.2025</div>
<svg class="ic" style="left:33.20px;top:499.15px" width="12" height="12" viewBox="0 0 12 12"><circle cx="6" cy="6" r="5.8" fill="#4e9a2a"/><circle cx="6" cy="5.6" r="5" fill="#7cc24a"/><ellipse cx="6" cy="4.2" rx="3.8" ry="2.8" fill="#9ad46c"/><path d="M3.2 4.2 L5.6 6.4 L8.8 3.2" fill="none" stroke="#fff" stroke-width="1.5"/><path d="M2.6 8.2 Q6 10.2 9.4 8.2" fill="none" stroke="#e8f6dc" stroke-width="0.8"/></svg>
<div class="t" style="left:47.10px;transform-origin:0 0;top:501.26px;font-size:10px;line-height:12px;transform:scaleX(0.8151);color:#303030;-webkit-text-stroke:0.1px #303030;">501</div>
<div class="t" style="left:114.90px;transform-origin:0 0;top:501.26px;font-size:10px;line-height:12px;transform:scaleX(0.8151);color:#303030;-webkit-text-stroke:0.1px #303030;">30.05.2025</div>
<div class="t" style="left:193.00px;transform-origin:0 0;top:501.26px;font-size:10px;line-height:12px;transform:scaleX(0.8151);color:#303030;-webkit-text-stroke:0.1px #303030;">Расчетно-плате...</div>
<div class="t" style="left:270.90px;transform-origin:0 0;top:501.26px;font-size:10px;line-height:12px;transform:scaleX(0.8151);color:#303030;-webkit-text-stroke:0.1px #303030;">Поликлиника со...</div>
<div class="t" style="left:349.10px;transform-origin:0 0;top:501.26px;font-size:10px;line-height:12px;transform:scaleX(0.8151);color:#303030;-webkit-text-stroke:0.1px #303030;">Новосибирское ...</div>
<div class="t" style="right:calc(100% - 496.70px);transform-origin:100% 0;top:501.26px;font-size:10px;line-height:12px;transform:scaleX(0.8151);color:#303030;-webkit-text-stroke:0.1px #303030;">153 964,99</div>
<svg class="ic" style="left:657.00px;top:499.15px" width="12" height="12" viewBox="0 0 12 12"><circle cx="6" cy="6" r="5.35" fill="#ededed" stroke="#7a7a7a" stroke-width="0.9"/><path d="M1.2 7.2 A5 5 0 0 0 10.8 7.2" fill="none" stroke="#4a4a4a" stroke-width="0.9"/><ellipse cx="6" cy="4.6" rx="3.6" ry="3" fill="#f8f8f8"/><path d="M4.1 3 h1.2 v3.8 a0.6 0.8 0 0 1 -1.2 0 Z" fill="#2e2e2e"/><path d="M6.9 3 h1.2 v3.8 a0.6 0.8 0 0 1 -1.2 0 Z" fill="#2e2e2e"/></svg>
<div class="t" style="left:-37.60px;transform-origin:0 0;top:516.98px;font-size:10px;line-height:12px;transform:scaleX(0.8151);color:#303030;-webkit-text-stroke:0.1px #303030;">31.05.2025</div>
<svg class="ic" style="left:33.20px;top:514.86px" width="12" height="12" viewBox="0 0 12 12"><circle cx="6" cy="6" r="5.35" fill="#e6e6e6" stroke="#7c7c7c" stroke-width="0.9"/><path d="M1.2 7.2 A5 5 0 0 0 10.8 7.2" fill="none" stroke="#555" stroke-width="0.9"/><ellipse cx="6" cy="4.8" rx="3.8" ry="3.2" fill="#f4f4f4"/><path d="M3.6 4.8 L5.5 6.6 L8.6 3.6" fill="none" stroke="#8c8c8c" stroke-width="1.2"/></svg>
<div class="t" style="left:47.10px;transform-origin:0 0;top:516.98px;font-size:10px;line-height:12px;transform:scaleX(0.8151);color:#303030;-webkit-text-stroke:0.1px #303030;">502</div>
<div class="t" style="left:114.90px;transform-origin:0 0;top:516.98px;font-size:10px;line-height:12px;transform:scaleX(0.8151);color:#303030;-webkit-text-stroke:0.1px #303030;">31.05.2025</div>
<div class="t" style="left:193.00px;transform-origin:0 0;top:516.98px;font-size:10px;line-height:12px;transform:scaleX(0.8151);color:#303030;-webkit-text-stroke:0.1px #303030;">Расчетно-плате...</div>
<div class="t" style="left:270.90px;transform-origin:0 0;top:516.98px;font-size:10px;line-height:12px;transform:scaleX(0.8151);color:#303030;-webkit-text-stroke:0.1px #303030;">ПоликлиникаОМС</div>
<div class="t" style="left:349.10px;transform-origin:0 0;top:516.98px;font-size:10px;line-height:12px;transform:scaleX(0.8151);color:#303030;-webkit-text-stroke:0.1px #303030;">Новосибирское ...</div>
<div class="t" style="right:calc(100% - 496.70px);transform-origin:100% 0;top:516.98px;font-size:10px;line-height:12px;transform:scaleX(0.8151);color:#303030;-webkit-text-stroke:0.1px #303030;">1 775 844,12</div>
<svg class="ic" style="left:657.00px;top:514.86px" width="12" height="12" viewBox="0 0 12 12"><circle cx="6" cy="6" r="5.35" fill="#ededed" stroke="#7a7a7a" stroke-width="0.9"/><path d="M1.2 7.2 A5 5 0 0 0 10.8 7.2" fill="none" stroke="#4a4a4a" stroke-width="0.9"/><ellipse cx="6" cy="4.6" rx="3.6" ry="3" fill="#f8f8f8"/><path d="M4.1 3 h1.2 v3.8 a0.6 0.8 0 0 1 -1.2 0 Z" fill="#2e2e2e"/><path d="M6.9 3 h1.2 v3.8 a0.6 0.8 0 0 1 -1.2 0 Z" fill="#2e2e2e"/></svg>
<div class="t" style="left:-37.60px;transform-origin:0 0;top:532.70px;font-size:10px;line-height:12px;transform:scaleX(0.8151);color:#303030;-webkit-text-stroke:0.1px #303030;">31.05.2025</div>
<svg class="ic" style="left:33.20px;top:530.58px" width="12" height="12" viewBox="0 0 12 12"><circle cx="6" cy="6" r="5.35" fill="#e6e6e6" stroke="#7c7c7c" stroke-width="0.9"/><path d="M1.2 7.2 A5 5 0 0 0 10.8 7.2" fill="none" stroke="#555" stroke-width="0.9"/><ellipse cx="6" cy="4.8" rx="3.8" ry="3.2" fill="#f4f4f4"/><path d="M3.6 4.8 L5.5 6.6 L8.6 3.6" fill="none" stroke="#8c8c8c" stroke-width="1.2"/></svg>
<div class="t" style="left:47.10px;transform-origin:0 0;top:532.70px;font-size:10px;line-height:12px;transform:scaleX(0.8151);color:#303030;-webkit-text-stroke:0.1px #303030;">503</div>
<div class="t" style="left:114.90px;transform-origin:0 0;top:532.70px;font-size:10px;line-height:12px;transform:scaleX(0.8151);color:#303030;-webkit-text-stroke:0.1px #303030;">31.05.2025</div>
<div class="t" style="left:193.00px;transform-origin:0 0;top:532.70px;font-size:10px;line-height:12px;transform:scaleX(0.8151);color:#303030;-webkit-text-stroke:0.1px #303030;">Расчетно-плате...</div>
<div class="t" style="left:270.90px;transform-origin:0 0;top:532.70px;font-size:10px;line-height:12px;transform:scaleX(0.8151);color:#303030;-webkit-text-stroke:0.1px #303030;">ПоликлиникаОМС</div>
<div class="t" style="left:349.10px;transform-origin:0 0;top:532.70px;font-size:10px;line-height:12px;transform:scaleX(0.8151);color:#303030;-webkit-text-stroke:0.1px #303030;">Банк &quot;Левобере...</div>
<div class="t" style="right:calc(100% - 496.70px);transform-origin:100% 0;top:532.70px;font-size:10px;line-height:12px;transform:scaleX(0.8151);color:#303030;-webkit-text-stroke:0.1px #303030;">2 440 223,44</div>
<svg class="ic" style="left:657.00px;top:530.58px" width="12" height="12" viewBox="0 0 12 12"><circle cx="6" cy="6" r="5.35" fill="#ededed" stroke="#7a7a7a" stroke-width="0.9"/><path d="M1.2 7.2 A5 5 0 0 0 10.8 7.2" fill="none" stroke="#4a4a4a" stroke-width="0.9"/><ellipse cx="6" cy="4.6" rx="3.6" ry="3" fill="#f8f8f8"/><path d="M4.1 3 h1.2 v3.8 a0.6 0.8 0 0 1 -1.2 0 Z" fill="#2e2e2e"/><path d="M6.9 3 h1.2 v3.8 a0.6 0.8 0 0 1 -1.2 0 Z" fill="#2e2e2e"/></svg>
<div class="t" style="left:-37.60px;transform-origin:0 0;top:548.41px;font-size:10px;line-height:12px;transform:scaleX(0.8151);color:#303030;-webkit-text-stroke:0.1px #303030;">31.05.2025</div>
<svg class="ic" style="left:33.20px;top:546.30px" width="12" height="12" viewBox="0 0 12 12"><circle cx="6" cy="6" r="5.35" fill="#e6e6e6" stroke="#7c7c7c" stroke-width="0.9"/><path d="M1.2 7.2 A5 5 0 0 0 10.8 7.2" fill="none" stroke="#555" stroke-width="0.9"/><ellipse cx="6" cy="4.8" rx="3.8" ry="3.2" fill="#f4f4f4"/><path d="M3.6 4.8 L5.5 6.6 L8.6 3.6" fill="none" stroke="#8c8c8c" stroke-width="1.2"/></svg>
<div class="t" style="left:47.10px;transform-origin:0 0;top:548.41px;font-size:10px;line-height:12px;transform:scaleX(0.8151);color:#303030;-webkit-text-stroke:0.1px #303030;">504</div>
<div class="t" style="left:114.90px;transform-origin:0 0;top:548.41px;font-size:10px;line-height:12px;transform:scaleX(0.8151);color:#303030;-webkit-text-stroke:0.1px #303030;">31.05.2025</div>
<div class="t" style="left:193.00px;transform-origin:0 0;top:548.41px;font-size:10px;line-height:12px;transform:scaleX(0.8151);color:#303030;-webkit-text-stroke:0.1px #303030;">Расчетно-плате...</div>
<div class="t" style="left:270.90px;transform-origin:0 0;top:548.41px;font-size:10px;line-height:12px;transform:scaleX(0.8151);color:#303030;-webkit-text-stroke:0.1px #303030;">ПоликлиникаОМС</div>
<div class="t" style="left:349.10px;transform-origin:0 0;top:548.41px;font-size:10px;line-height:12px;transform:scaleX(0.8151);color:#303030;-webkit-text-stroke:0.1px #303030;">Филиал № 5440...</div>
<div class="t" style="right:calc(100% - 496.70px);transform-origin:100% 0;top:548.41px;font-size:10px;line-height:12px;transform:scaleX(0.8151);color:#303030;-webkit-text-stroke:0.1px #303030;">98 207,89</div>
<svg class="ic" style="left:657.00px;top:546.30px" width="12" height="12" viewBox="0 0 12 12"><circle cx="6" cy="6" r="5.35" fill="#ededed" stroke="#7a7a7a" stroke-width="0.9"/><path d="M1.2 7.2 A5 5 0 0 0 10.8 7.2" fill="none" stroke="#4a4a4a" stroke-width="0.9"/><ellipse cx="6" cy="4.6" rx="3.6" ry="3" fill="#f8f8f8"/><path d="M4.1 3 h1.2 v3.8 a0.6 0.8 0 0 1 -1.2 0 Z" fill="#2e2e2e"/><path d="M6.9 3 h1.2 v3.8 a0.6 0.8 0 0 1 -1.2 0 Z" fill="#2e2e2e"/></svg>
<div class="abs" style="left:812.4px;top:58.20px;width:14.6px;height:508px;background:#f1f1f1"></div>
<svg class="ic" style="left:817px;top:62.70px" width="6" height="4"><path d="M0 3.6 L6 3.6 L3 0 Z" fill="#4a4a4a"/></svg>
<div class="abs" style="left:816px;top:303.80px;width:10.3px;height:151px;background:#c1c1c1"></div>
<svg class="ic" style="left:817.2px;top:558.40px" width="6" height="4"><path d="M0 0 L6 0 L3 3.6 Z" fill="#4a4a4a"/></svg>
<div class="abs" style="left:0;top:566.70px;width:812.4px;height:15px;background:#f0f0f1"></div>
<div class="t" style="right:calc(100% - 489.40px);transform-origin:100% 0;top:569.42px;font-size:10px;line-height:12px;transform:scaleX(0.922);color:#1a1a1a;font-weight:bold;">15 347 289,61</div>
</div>
<div class="abs" style="left:0;top:610px;width:827.6px;height:1px;background:#c6c6c6"></div>
<div class="abs" style="left:832.6px;top:15.3px;width:463px;height:1px;background:#dcd2c8"></div>
<div class="abs" style="left:832.6px;top:16px;width:463px;height:17.8px;background:linear-gradient(#3d92d2,#1b6cae)"></div>
<div class="clip" style="left:833px;top:34px;width:462px;height:577px;background:#dbe9f5">
<div class="box" style="left:1.0px;top:3.6000000000000014px;width:500px;height:570px;border-color:#c8c8c8;border-bottom-width:2px"></div>
<div class="abs" style="left:2.5px;top:5px;width:500px;height:18px;background:linear-gradient(#e2edf7,#d8e5f1)"></div>
<div class="tab" style="left:3.2000000000000455px;top:6px;width:78.7px;height:17px"></div>
<div class="tab act" style="left:84.39999999999998px;top:5.399999999999999px;width:68px;height:18px"></div>
<div class="tab" style="left:154.79999999999995px;top:6px;width:102.7px;height:17px"></div>
<div class="strip" style="left:2.5px;top:22.799999999999997px;width:500px;height:2px"></div>
<div class="t" style="left:11.00px;transform-origin:0 0;top:8.82px;font-size:10px;line-height:12px;transform:scaleX(0.8151);color:#333;-webkit-text-stroke:0.1px #333;">Общие сведения</div>
<div class="t" style="left:91.00px;transform-origin:0 0;top:8.82px;font-size:10px;line-height:12px;transform:scaleX(0.877);color:#222;font-weight:bold;">Содержание</div>
<div class="t" style="left:161.00px;transform-origin:0 0;top:8.82px;font-size:10px;line-height:12px;transform:scaleX(0.8151);color:#333;-webkit-text-stroke:0.1px #333;">Прикрепленные файлы</div>
<div class="abs" style="left:5.7999999999999545px;top:34.900000000000006px;width:8px;height:1px;background:#c8ccd0"></div>
<div class="abs" style="left:76px;top:34.900000000000006px;width:400px;height:1px;background:#c8ccd0"></div>
<div class="abs" style="left:14.5px;top:30px;width:10.5px;height:11px;border:1px solid #c0c0c0;border-radius:2px;background:linear-gradient(#fff,#e4e4e4)"><svg width="10" height="10" style="position:absolute;left:-0.5px;top:0"><path d="M2.6 4.2 L7.4 4.2 L5 6.8 Z" fill="#333"/></svg></div>
<div class="t" style="left:27.60px;transform-origin:0 0;top:31.11px;font-size:10px;line-height:12px;transform:scaleX(0.862);color:#303030;font-weight:bold;">Реквизиты</div>
<div class="box" style="left:5.7999999999999545px;top:61.599999999999994px;width:500px;height:498.4px;border-color:#ccd0d4"></div>
<div class="abs" style="left:12px;top:56px;width:57px;height:13px;background:#dbe9f5"></div>
<div class="abs" style="left:14.5px;top:57.5px;width:10.5px;height:11px;border:1px solid #c0c0c0;border-radius:2px;background:linear-gradient(#fff,#e4e4e4)"><svg width="10" height="10" style="position:absolute;left:-0.5px;top:0"><path d="M2.6 6.4 L7.4 6.4 L5 3.8 Z" fill="#333"/></svg></div>
<div class="t" style="left:27.60px;transform-origin:0 0;top:57.41px;font-size:10px;line-height:12px;transform:scaleX(0.84);color:#303030;font-weight:bold;">Выплаты</div>
<div class="box" style="left:14.100000000000023px;top:76.1px;width:500px;height:474.8px;border-color:#c8ccd0"></div>
<div class="abs" style="left:15.600000000000023px;top:77.6px;width:500px;height:16.5px;background:linear-gradient(#e2edf7,#d8e5f1)"></div>
<div class="tab act" style="left:16.700000000000045px;top:78px;width:54.4px;height:17px"></div>
<div class="tab" style="left:74px;top:78.5px;width:58.6px;height:15.5px"></div>
<div class="tab" style="left:135.5px;top:78.5px;width:36.5px;height:15.5px"></div>
<div class="strip" style="left:15.600000000000023px;top:93.8px;width:500px;height:2.6px"></div>
<div class="t" style="left:23.90px;transform-origin:0 0;top:80.81px;font-size:10px;line-height:12px;transform:scaleX(0.867);color:#303030;font-weight:bold;">К выдаче</div>
<div class="t" style="left:80.90px;transform-origin:0 0;top:80.81px;font-size:10px;line-height:12px;transform:scaleX(0.8151);color:#333;-webkit-text-stroke:0.1px #333;">Начисление</div>
<div class="t" style="left:142.50px;transform-origin:0 0;top:80.81px;font-size:10px;line-height:12px;transform:scaleX(0.8151);color:#333;-webkit-text-stroke:0.1px #333;">НДФЛ</div>
<div class="abs" style="left:22.100000000000023px;top:104.30000000000001px;width:500px;height:437.5px;background:#fcfcfd;border:1px solid #d0d4d8;border-right:none"></div>
<div class="abs" style="left:23.100000000000023px;top:105.30000000000001px;width:500px;height:19.4px;background:linear-gradient(#dbe8f4,#e6f0f8);border-bottom:1px solid #d8dde2"></div>
<svg class="ic" style="left:26.700000000000045px;top:109px" width="12.5" height="12" viewBox="0 0 12.5 12"><rect x="0.2" y="0" width="12" height="10.5" rx="2" fill="#c496de"/><rect x="0.2" y="0" width="12" height="5" rx="2" fill="#d6b2ec"/><rect x="0.5" y="10" width="11.5" height="1.8" rx="0.8" fill="#9a50c0"/><path d="M3.6 2.2 H8.6 M3.6 2.2 L6.2 5.2 L3.6 8.2 H8.6" fill="none" stroke="#3a2a48" stroke-width="1"/></svg>
<div class="t" style="left:40.60px;transform-origin:0 0;top:110.61px;font-size:10px;line-height:12px;transform:scaleX(0.8151);color:#303030;-webkit-text-stroke:0.1px #303030;">Расчет выплаты</div>
<div class="abs" style="left:23.100000000000023px;top:125.6px;width:500px;height:18px;background:linear-gradient(#e6f3fc,#cfe2f2)"></div>
<div class="abs" style="left:23.100000000000023px;top:158px;width:500px;height:1px;background:#ececec"></div>
<div class="t" style="left:27.80px;transform-origin:0 0;top:130.12px;font-size:10px;line-height:12px;transform:scaleX(0.8151);color:#303030;-webkit-text-stroke:0.1px #303030;">ФИО</div>
<div class="t" style="left:27.80px;transform-origin:0 0;top:146.62px;font-size:10px;line-height:12px;transform:scaleX(0.8151);color:#303030;-webkit-text-stroke:0.1px #303030;">Якубовская Ольга Евге...</div>
<div class="abs" style="left:129.0px;top:125.6px;width:1px;height:18px;background:#c6d4e0"></div>
<div class="abs" style="left:129.0px;top:143.6px;width:1px;height:14.6px;background:#ececec"></div>
<div class="t" style="left:134.70px;transform-origin:0 0;top:130.12px;font-size:10px;line-height:12px;transform:scaleX(0.8151);color:#303030;-webkit-text-stroke:0.1px #303030;">Тип...</div>
<div class="t" style="left:134.70px;transform-origin:0 0;top:146.62px;font-size:10px;line-height:12px;transform:scaleX(0.8151);color:#303030;-webkit-text-stroke:0.1px #303030;">Пла...</div>
<div class="abs" style="left:158.0px;top:125.6px;width:1px;height:18px;background:#c6d4e0"></div>
<div class="abs" style="left:158.0px;top:143.6px;width:1px;height:14.6px;background:#ececec"></div>
<div class="t" style="left:163.70px;transform-origin:0 0;top:130.12px;font-size:10px;line-height:12px;transform:scaleX(0.8151);color:#303030;-webkit-text-stroke:0.1px #303030;">Источник</div>
<div class="t" style="left:163.70px;transform-origin:0 0;top:146.62px;font-size:10px;line-height:12px;transform:scaleX(0.8151);color:#303030;-webkit-text-stroke:0.1px #303030;">Поликлин...</div>
<div class="abs" style="left:210.5px;top:125.6px;width:1px;height:18px;background:#c6d4e0"></div>
<div class="abs" style="left:210.5px;top:143.6px;width:1px;height:14.6px;background:#ececec"></div>
<div class="t" style="left:216.20px;transform-origin:0 0;top:130.12px;font-size:10px;line-height:12px;transform:scaleX(0.8151);color:#303030;-webkit-text-stroke:0.1px #303030;">С...</div>
<div class="t" style="left:216.20px;transform-origin:0 0;top:146.62px;font-size:10px;line-height:12px;transform:scaleX(0.8151);color:#303030;-webkit-text-stroke:0.1px #303030;">1...</div>
<div class="abs" style="left:231.5px;top:125.6px;width:1px;height:18px;background:#c6d4e0"></div>
<div class="abs" style="left:231.5px;top:143.6px;width:1px;height:14.6px;background:#ececec"></div>
<div class="t" style="left:237.20px;transform-origin:0 0;top:130.12px;font-size:10px;line-height:12px;transform:scaleX(0.8151);color:#303030;-webkit-text-stroke:0.1px #303030;">Итого на...</div>
<div class="t" style="left:237.20px;transform-origin:0 0;top:146.62px;font-size:10px;line-height:12px;transform:scaleX(0.8151);color:#303030;-webkit-text-stroke:0.1px #303030;">19 551,00</div>
<div class="abs" style="left:281.70000000000005px;top:125.6px;width:1px;height:18px;background:#c6d4e0"></div>
<div class="abs" style="left:281.70000000000005px;top:143.6px;width:1px;height:14.6px;background:#ececec"></div>
<div class="t" style="left:287.40px;transform-origin:0 0;top:130.12px;font-size:10px;line-height:12px;transform:scaleX(0.8151);color:#303030;-webkit-text-stroke:0.1px #303030;">НДФ...</div>
<div class="t" style="left:287.40px;transform-origin:0 0;top:146.62px;font-size:10px;line-height:12px;transform:scaleX(0.8151);color:#303030;-webkit-text-stroke:0.1px #303030;">982,...</div>
<div class="abs" style="left:313.0px;top:125.6px;width:1px;height:18px;background:#c6d4e0"></div>
<div class="abs" style="left:313.0px;top:143.6px;width:1px;height:14.6px;background:#ececec"></div>
<div class="t" style="left:318.70px;transform-origin:0 0;top:130.12px;font-size:10px;line-height:12px;transform:scaleX(0.8151);color:#303030;-webkit-text-stroke:0.1px #303030;">Вычет</div>
<div class="t" style="left:318.70px;transform-origin:0 0;top:146.62px;font-size:10px;line-height:12px;transform:scaleX(0.8151);color:#303030;-webkit-text-stroke:0.1px #303030;">12 000,00</div>
<div class="abs" style="left:387.4000000000001px;top:125.6px;width:1px;height:18px;background:#c6d4e0"></div>
<div class="abs" style="left:387.4000000000001px;top:143.6px;width:1px;height:14.6px;background:#ececec"></div>
<div class="t" style="left:393.10px;transform-origin:0 0;top:130.12px;font-size:10px;line-height:12px;transform:scaleX(0.8151);color:#303030;-webkit-text-stroke:0.1px #303030;">Ски...</div>
<div class="t" style="left:393.10px;transform-origin:0 0;top:146.62px;font-size:10px;line-height:12px;transform:scaleX(0.8151);color:#303030;-webkit-text-stroke:0.1px #303030;">0,00</div>
<div class="abs" style="left:416.4000000000001px;top:125.6px;width:1px;height:18px;background:#c6d4e0"></div>
<div class="abs" style="left:416.4000000000001px;top:143.6px;width:1px;height:14.6px;background:#ececec"></div>
<div class="t" style="left:422.10px;transform-origin:0 0;top:130.12px;font-size:10px;line-height:12px;transform:scaleX(0.8151);color:#303030;-webkit-text-stroke:0.1px #303030;">Уде...</div>
<div class="t" style="left:422.10px;transform-origin:0 0;top:146.62px;font-size:10px;line-height:12px;transform:scaleX(0.8151);color:#303030;-webkit-text-stroke:0.1px #303030;">0,00</div>
<div class="abs" style="left:444.4000000000001px;top:125.6px;width:1px;height:18px;background:#c6d4e0"></div>
<div class="abs" style="left:444.4000000000001px;top:143.6px;width:1px;height:14.6px;background:#ececec"></div>
<div class="t" style="left:450.10px;transform-origin:0 0;top:130.12px;font-size:10px;line-height:12px;transform:scaleX(0.8151);color:#303030;-webkit-text-stroke:0.1px #303030;">Сум</div>
<div class="t" style="left:450.10px;transform-origin:0 0;top:146.62px;font-size:10px;line-height:12px;transform:scaleX(0.8151);color:#303030;-webkit-text-stroke:0.1px #303030;"></div>
<div class="t" style="left:459.60px;transform-origin:0 0;top:146.62px;font-size:10px;line-height:12px;transform:scaleX(0.8151);color:#303030;-webkit-text-stroke:0.1px #303030;">19</div>
<div class="abs" style="left:23.100000000000023px;top:527px;width:500px;height:15px;background:#f0f0f1"></div>
<div class="t" style="left:237.80px;transform-origin:0 0;top:530.12px;font-size:10px;line-height:12px;transform:scaleX(0.9);color:#1a1a1a;font-weight:bold;">19 551,00</div>
<div class="t" style="left:287.60px;transform-origin:0 0;top:530.12px;font-size:10px;line-height:12px;transform:scaleX(0.9);color:#1a1a1a;font-weight:bold;">982...</div>
<div class="t" style="left:319.60px;transform-origin:0 0;top:530.12px;font-size:10px;line-height:12px;transform:scaleX(0.9);color:#1a1a1a;font-weight:bold;">12 000,00</div>
<div class="t" style="left:394.40px;transform-origin:0 0;top:530.12px;font-size:10px;line-height:12px;transform:scaleX(0.9);color:#1a1a1a;font-weight:bold;">0,00</div>
<div class="t" style="left:422.00px;transform-origin:0 0;top:530.12px;font-size:10px;line-height:12px;transform:scaleX(0.9);color:#1a1a1a;font-weight:bold;">0,00</div>
<div class="t" style="left:455.00px;transform-origin:0 0;top:530.12px;font-size:10px;line-height:12px;transform:scaleX(0.9);color:#1a1a1a;font-weight:bold;">19 5</div>
</div>
<div class="abs" style="left:1295px;top:0;width:1px;height:644px;background:#fff;z-index:5"></div>
<div class="abs" style="left:1296px;top:0;width:8px;height:644px;background:#f0f0f0;z-index:5"></div>
<svg class="ic" style="left:1298.5px;top:3px;z-index:6" width="8" height="7"><path d="M0.8 6 L4.5 1.8 L8 5.5" fill="none" stroke="#4a4a4a" stroke-width="1.4"/></svg>
<div class="abs" style="left:1296.1px;top:113.9px;width:8px;height:486px;background:#c6c6c6;z-index:6"></div>
<svg class="ic" style="left:1298.5px;top:632px;z-index:6" width="8" height="7"><path d="M0.8 1 L4.5 5.2 L8 1.5" fill="none" stroke="#4a4a4a" stroke-width="1.4"/></svg>
<div class="abs" style="left:0;top:610.6px;width:1295px;height:1px;background:#c8c8c8"></div>
<div class="abs" style="left:0;top:611.6px;width:1295px;height:3.4px;background:linear-gradient(#2f8ad0,#3d96d6)"></div>
<div class="abs" style="left:0;top:615px;width:1295px;height:26.8px;background-color:#0b6ea8;background-image:radial-gradient(circle at 50% 50%, #0a659d 0.7px, transparent 1.1px),radial-gradient(circle at 50% 50%, #0a659d 0.7px, transparent 1.1px);background-size:5.1px 5.4px,5.1px 5.4px;background-position:0 0,2.55px 2.7px;border-top:1px solid #0a5c94;border-bottom:1px solid #0a5a92"></div>
<div class="abs" style="left:0;top:641.8px;width:1295px;height:3px;background:#e6e8ea"></div>
<div class="abs" style="left:0;top:620.9px;width:5px;height:21px;background:linear-gradient(90deg,#2a78b4,#5aa2d8)"></div>
<div class="ttab act" style="left:8px;top:620.9px;width:129.3px;height:21.4px"></div>
<svg class="ic" style="left:11.2px;top:626.6px" width="12" height="11" viewBox="0 0 12 11">
<rect x="0.5" y="0.5" width="11" height="10" rx="1.5" fill="#dde8f8" stroke="#7896d0" stroke-width="0.9"/>
<rect x="1.2" y="1.2" width="9.6" height="1.8" fill="#9fb8e8"/>
<path d="M2.5 4.5 h7.5 M2.5 6.3 h7.5 M2.5 8.1 h7.5" stroke="#8aa2c8" stroke-width="0.8"/>
<path d="M2 4.5 h0.8 M2 6.3 h0.8 M2 8.1 h0.8" stroke="#4a6ab8" stroke-width="0.8"/>
</svg>
<div class="t" style="left:26.60px;transform-origin:0 0;top:626.72px;font-size:10px;line-height:12px;transform:scaleX(0.8151);color:#1f5d9a;-webkit-text-stroke:0.1px #1f5d9a;">Выплаты заработной платы</div>
<div class="ttab" style="left:140px;top:620.9px;width:120.8px;height:21.4px"></div>
<svg class="ic" style="left:143.4px;top:626.6px" width="12" height="11" viewBox="0 0 12 11">
<rect x="0.5" y="0.5" width="11" height="10" rx="1.5" fill="#dde8f8" stroke="#7896d0" stroke-width="0.9"/>
<rect x="1.2" y="1.2" width="9.6" height="1.8" fill="#9fb8e8"/>
<path d="M2.5 4.5 h7.5 M2.5 6.3 h7.5 M2.5 8.1 h7.5" stroke="#8aa2c8" stroke-width="0.8"/>
<path d="M2 4.5 h0.8 M2 6.3 h0.8 M2 8.1 h0.8" stroke="#4a6ab8" stroke-width="0.8"/>
</svg>
<div class="t" style="left:158.60px;transform-origin:0 0;top:626.72px;font-size:10px;line-height:12px;transform:scaleX(0.8151);color:#333;-webkit-text-stroke:0.1px #333;">Расчеты по заработной ...</div>
<div class="ttab" style="left:264px;top:620.9px;width:126.5px;height:21.4px"></div>
<svg class="ic" style="left:267.4px;top:626.6px" width="12" height="11" viewBox="0 0 12 11">
<rect x="0.5" y="0.5" width="11" height="10" rx="1.5" fill="#dde8f8" stroke="#7896d0" stroke-width="0.9"/>
<rect x="1.2" y="1.2" width="9.6" height="1.8" fill="#9fb8e8"/>
<path d="M2.5 4.5 h7.5 M2.5 6.3 h7.5 M2.5 8.1 h7.5" stroke="#8aa2c8" stroke-width="0.8"/>
<path d="M2 4.5 h0.8 M2 6.3 h0.8 M2 8.1 h0.8" stroke="#4a6ab8" stroke-width="0.8"/>
</svg>
<div class="t" style="left:282.80px;transform-origin:0 0;top:626.72px;font-size:10px;line-height:12px;transform:scaleX(0.8151);color:#333;-webkit-text-stroke:0.1px #333;">Реестр налоговых карточек</div>
<div class="t" style="right:calc(100% - 1276.50px);transform-origin:100% 0;top:616.19px;font-size:7.6px;line-height:12px;transform:scaleX(0.95);color:#fff;font-weight:bold;">Лицензия номер: 11626; Обладатель:</div>
<div class="t" style="right:calc(100% - 1276.50px);transform-origin:100% 0;top:624.29px;font-size:7.6px;line-height:12px;transform:scaleX(0.95);color:#fff;font-weight:bold;">МИНЦИФРА НСО</div>
<div class="t" style="left:1285.60px;transform-origin:0 0;top:622.69px;font-size:16.5px;line-height:12px;transform:scaleX(0.95);color:#f4f4f4;-webkit-text-stroke:0.6px #f4f4f4;">?</div>
<svg class="ic" style="left:554px;top:439.2px;z-index:9" width="10" height="16" viewBox="0 0 10 16"><path d="M0.5 0.5 L0.5 12.5 L3.3 10 L5.4 14.6 L7.2 13.8 L5.2 9.3 L9 9.3 Z" fill="#fff" stroke="#111" stroke-width="0.9"/></svg>
</body></html>
